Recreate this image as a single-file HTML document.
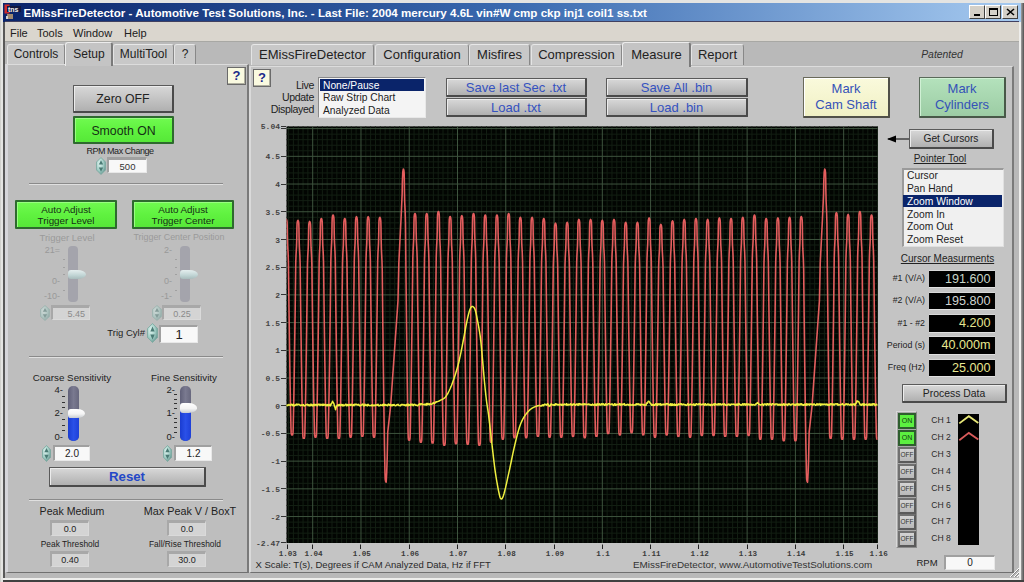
<!DOCTYPE html><html><head><meta charset="utf-8"><style>
*{margin:0;padding:0;box-sizing:border-box}
html,body{width:1024px;height:582px;overflow:hidden;background:#e6e6e6;font-family:"Liberation Sans",sans-serif;color:#222}
div{position:absolute}
.t{white-space:nowrap;text-align:center;overflow:visible}
.btn{background:linear-gradient(#d8d8d8,#c6c6c6 45%,#b0b0b0);border:1px solid #5a5a5a;border-right:2px solid #4a4a4a;border-bottom:2px solid #4a4a4a;border-radius:1px;box-shadow:inset 1px 1px 0 #ececec}
.gbtn{background:linear-gradient(#70fa50,#60f240 50%,#56e838);border:2px solid #2e6a2e;border-radius:1px;box-shadow:inset 1px 1px 0 #98ff80}
.tab{background:#c6c6c6;border-top:1px solid #e8e8e8;border-left:1px solid #e4e4e4;border-right:1px solid #808080;border-radius:3px 3px 0 0}
.num{background:#f8f8f8;border-top:2px solid #a0a0a0;border-left:2px solid #a0a0a0;border-bottom:1px solid #e8e8e8;border-right:1px solid #e8e8e8;font-size:10px;text-align:center}
.dnum{background:#d4d4d4;border-top:3px solid #a8a8a8;border-left:2px solid #a8a8a8;border-bottom:1px solid #dadada;border-right:1px solid #dadada;font-size:9px;text-align:center;color:#222}
.spin{background:radial-gradient(ellipse at 40% 40%,#d0e8e8,#90b8b8 70%,#6a9090);border-radius:50%/50%}
.blk{background:#000;border-top:1px solid #d8d8d8;border-left:0;border-bottom:1px solid #e0e0e0;border-right:0;text-align:right;font-size:12.6px;padding-right:4px}
.sep{background:#8a8a8a;height:2px;border-bottom:1px solid #e0e0e0}
</style></head><body>
<div style="left:0px;top:0px;width:1024px;height:582px;background:#e4e4e2"></div>
<div style="left:0px;top:0px;width:1px;height:582px;background:#d0d0cc"></div>
<div style="left:3px;top:3px;width:1018px;height:578px;background:#b8b8b8"></div>
<div style="left:3px;top:22px;width:2px;height:558px;background:#585858"></div>
<div style="left:1019px;top:22px;width:2px;height:557px;background:#eeeeec"></div>
<div style="left:1021px;top:3px;width:3px;height:579px;background:linear-gradient(90deg,#a0a0a0,#505050)"></div>
<div style="left:3px;top:578px;width:1018px;height:2px;background:#eeeeec"></div>
<div style="left:3px;top:580px;width:1021px;height:2px;background:#404040"></div>
<div style="left:3px;top:3px;width:1018px;height:19px;background:linear-gradient(90deg,#0a246a 0%,#3a6ab0 50%,#a6caf0 100%)"></div>
<svg style="position:absolute;left:0;top:0" width="24" height="22"><rect x="4.5" y="4.5" width="5" height="9" fill="#d02a2a"/><rect x="7" y="6" width="14" height="6" fill="#101840"/><text x="8" y="11.5" font-family="Liberation Sans" font-size="7" font-weight="bold" fill="#f0f0f0">tns</text><rect x="7" y="14" width="6" height="5" fill="#a08a70"/><rect x="6" y="16" width="2" height="3" fill="#d0d0d0"/></svg>
<div class="t" style="left:23.5px;top:3px;width:640px;height:19px;line-height:19px;text-align:left;color:#fff;font-weight:bold;font-size:11.6px">EMissFireDetector - Automotive Test Solutions, Inc. - Last File: 2004 mercury 4.6L vin#W cmp ckp inj1 coil1 ss.txt</div>
<div style="left:969px;top:5px;width:16px;height:14px;background:#d4d0c8;border-top:1px solid #fff;border-left:1px solid #fff;border-right:1px solid #404040;border-bottom:1px solid #404040"><div style="left:4px;top:8px;width:6px;height:2px;background:#000"></div></div>
<div style="left:985px;top:5px;width:16px;height:14px;background:#d4d0c8;border-top:1px solid #fff;border-left:1px solid #fff;border-right:1px solid #404040;border-bottom:1px solid #404040"><div style="left:3px;top:2px;width:9px;height:8px;border:1px solid #000;border-top-width:2px"></div></div>
<div style="left:1002px;top:5px;width:16px;height:14px;background:#d4d0c8;border-top:1px solid #fff;border-left:1px solid #fff;border-right:1px solid #404040;border-bottom:1px solid #404040"><svg style="position:absolute;left:3px;top:2px" width="9" height="8"><path d="M1 1L8 7M8 1L1 7" stroke="#000" stroke-width="1.6"/></svg></div>
<div style="left:5px;top:21px;width:1014px;height:21px;background:#dad6ce;border-top:1px solid #404060;border-bottom:1px solid #a8a8a4"></div>
<div class="t" style="left:10px;top:25px;width:15px;height:17px;line-height:17px;text-align:left;font-size:11px;color:#202020">File</div>
<div class="t" style="left:37px;top:25px;width:25px;height:17px;line-height:17px;text-align:left;font-size:11px;color:#202020">Tools</div>
<div class="t" style="left:73px;top:25px;width:40px;height:17px;line-height:17px;text-align:left;font-size:11px;color:#202020">Window</div>
<div class="t" style="left:124px;top:25px;width:21px;height:17px;line-height:17px;text-align:left;font-size:11px;color:#202020">Help</div>
<div style="left:5px;top:42px;width:1014px;height:536px;background:#b9b9b9"></div>
<div style="left:5px;top:64px;width:244px;height:509px;background:#bebebe;border-right:2px solid #7a7a7a;border-top:1px solid #dcdcdc;border-left:3px solid #d6d6da;border-bottom:1px solid #707070"></div>
<div style="left:7px;top:44px;width:58px;height:20px;background:#c8c8c8;border-top:1px solid #e8e8e8;border-left:1px solid #e4e4e4;border-right:1px solid #888;border-radius:3px 3px 0 0"></div>
<div class="t" style="left:7px;top:44px;width:58px;height:20px;line-height:20px;font-size:12px;color:#222">Controls</div>
<div style="left:65px;top:42px;width:48px;height:24px;background:#c4c4c4;border-top:1px solid #ececec;border-left:1px solid #ececec;border-right:2px solid #7a7a7a;border-radius:3px 3px 0 0"></div>
<div class="t" style="left:65px;top:44px;width:48px;height:20px;line-height:20px;font-size:12px;color:#222">Setup</div>
<div style="left:113px;top:44px;width:61px;height:20px;background:#c8c8c8;border-top:1px solid #e8e8e8;border-left:1px solid #e4e4e4;border-right:1px solid #888;border-radius:3px 3px 0 0"></div>
<div class="t" style="left:113px;top:44px;width:61px;height:20px;line-height:20px;font-size:12px;color:#222">MultiTool</div>
<div style="left:174px;top:44px;width:22px;height:20px;background:#c8c8c8;border-top:1px solid #e8e8e8;border-left:1px solid #e4e4e4;border-right:1px solid #888;border-radius:3px 3px 0 0"></div>
<div class="t" style="left:174px;top:44px;width:22px;height:20px;line-height:20px;font-size:12px;color:#222">?</div>
<div style="left:227px;top:67px;width:19px;height:18px;background:#fafae0;border:1px solid #6a6a6a;box-shadow:inset -1px -1px 0 #b0b0a0"><div class="t" style="left:0;top:0;width:17px;height:16px;line-height:16px;font-weight:bold;font-size:13px;color:#1a2a8a">?</div></div>
<div style="left:73px;top:85px;width:101px;height:28px;"></div>
<div class="btn t" style="left:73px;top:85px;width:101px;height:28px;line-height:26px;font-size:12.3px;color:#222">Zero OFF</div>
<div class="gbtn t" style="left:73px;top:116px;width:101px;height:28px;line-height:26px;font-size:12.3px;color:#153015">Smooth ON</div>
<div class="t" style="left:60px;top:146px;width:120px;height:11px;line-height:11px;font-size:9px;letter-spacing:-0.45px;color:#1e1e1e">RPM Max Change</div>
<svg style="position:absolute;left:96px;top:157px;opacity:1.0" width="10" height="18"><defs><radialGradient id="sg96157" cx="35%" cy="35%" r="70%"><stop offset="0" stop-color="#e0f4f0"/><stop offset="0.6" stop-color="#a0ccc4"/><stop offset="1" stop-color="#6a9a94"/></radialGradient></defs><path d="M5.0 0.5 L9.5 5.040000000000001 L9.5 12.959999999999999 L5.0 17.5 L0.5 12.959999999999999 L0.5 5.040000000000001 Z" fill="url(#sg96157)" stroke="#7aa8a0" stroke-width="0.8"/><path d="M5.0 3.2399999999999998 L7.2 7.56 L2.8 7.56 Z M5.0 14.76 L7.2 10.44 L2.8 10.44 Z" fill="#4a7a74"/></svg>
<div class="num t" style="left:107px;top:157px;width:40px;height:16px;line-height:13px;font-size:9.5px;color:#333;border-top-width:3px">500</div>
<div class="sep" style="left:29px;top:183px;width:194px"></div>
<div class="gbtn t" style="left:15px;top:200px;width:102px;height:29px;line-height:11px;font-size:9.8px;color:#153015;padding-top:2px">Auto Adjust<br>Trigger Level</div>
<div class="gbtn t" style="left:132px;top:200px;width:102px;height:29px;line-height:11px;font-size:9.8px;color:#153015;padding-top:2px">Auto Adjust<br>Trigger Center</div>
<div class="t" style="left:17px;top:232px;width:100px;height:11px;line-height:11px;font-size:9.5px;color:#9a9a9a">Trigger Level</div>
<div class="t" style="left:129px;top:232px;width:100px;height:11px;line-height:11px;font-size:8.9px;color:#9a9a9a">Trigger Center Position</div>
<div style="left:68px;top:246px;width:10px;height:56px;background:#a4a4ac;border-radius:4px"></div>
<div style="left:68px;top:270px;width:18px;height:9px;background:linear-gradient(#e4eeee,#c0d4d4 60%,#a8bcbc);border-radius:3px 50% 50% 3px / 3px 50% 50% 3px"></div>
<div class="t" style="left:38px;top:245px;width:22px;height:10px;line-height:10px;text-align:right;font-size:9px;color:#999">21=</div>
<div class="t" style="left:38px;top:276px;width:22px;height:10px;line-height:10px;text-align:right;font-size:9px;color:#999">0-</div>
<div class="t" style="left:38px;top:291px;width:22px;height:10px;line-height:10px;text-align:right;font-size:9px;color:#999">-10-</div>
<div style="left:63px;top:259px;width:2px;height:1px;background:#a0a0a0"></div>
<div style="left:63px;top:267px;width:2px;height:1px;background:#a0a0a0"></div>
<div style="left:63px;top:274px;width:2px;height:1px;background:#a0a0a0"></div>
<div style="left:63px;top:290px;width:2px;height:1px;background:#a0a0a0"></div>
<div style="left:180px;top:246px;width:10px;height:56px;background:#a4a4ac;border-radius:4px"></div>
<div style="left:180px;top:270px;width:18px;height:9px;background:linear-gradient(#e4eeee,#c0d4d4 60%,#a8bcbc);border-radius:3px 50% 50% 3px / 3px 50% 50% 3px"></div>
<div class="t" style="left:150px;top:245px;width:22px;height:10px;line-height:10px;text-align:right;font-size:9px;color:#999">2-</div>
<div class="t" style="left:150px;top:276px;width:22px;height:10px;line-height:10px;text-align:right;font-size:9px;color:#999">0-</div>
<div class="t" style="left:150px;top:291px;width:22px;height:10px;line-height:10px;text-align:right;font-size:9px;color:#999">-1-</div>
<div style="left:175px;top:259px;width:2px;height:1px;background:#a0a0a0"></div>
<div style="left:175px;top:267px;width:2px;height:1px;background:#a0a0a0"></div>
<div style="left:175px;top:274px;width:2px;height:1px;background:#a0a0a0"></div>
<div style="left:175px;top:290px;width:2px;height:1px;background:#a0a0a0"></div>
<svg style="position:absolute;left:40px;top:305px;opacity:0.5" width="10" height="16"><defs><radialGradient id="sg40305" cx="35%" cy="35%" r="70%"><stop offset="0" stop-color="#e0f4f0"/><stop offset="0.6" stop-color="#a0ccc4"/><stop offset="1" stop-color="#6a9a94"/></radialGradient></defs><path d="M5.0 0.5 L9.5 4.48 L9.5 11.52 L5.0 15.5 L0.5 11.52 L0.5 4.48 Z" fill="url(#sg40305)" stroke="#7aa8a0" stroke-width="0.8"/><path d="M5.0 2.88 L7.2 6.72 L2.8 6.72 Z M5.0 13.12 L7.2 9.28 L2.8 9.28 Z" fill="#4a7a74"/></svg>
<div class="dnum t" style="left:51px;top:305px;width:39px;height:15px;line-height:12px;text-align:right;padding-right:4px;color:#8a8a8a">5.45</div>
<svg style="position:absolute;left:152px;top:305px;opacity:0.5" width="10" height="16"><defs><radialGradient id="sg152305" cx="35%" cy="35%" r="70%"><stop offset="0" stop-color="#e0f4f0"/><stop offset="0.6" stop-color="#a0ccc4"/><stop offset="1" stop-color="#6a9a94"/></radialGradient></defs><path d="M5.0 0.5 L9.5 4.48 L9.5 11.52 L5.0 15.5 L0.5 11.52 L0.5 4.48 Z" fill="url(#sg152305)" stroke="#7aa8a0" stroke-width="0.8"/><path d="M5.0 2.88 L7.2 6.72 L2.8 6.72 Z M5.0 13.12 L7.2 9.28 L2.8 9.28 Z" fill="#4a7a74"/></svg>
<div class="dnum t" style="left:162px;top:305px;width:39px;height:15px;line-height:12px;color:#8a8a8a">0.25</div>
<div class="t" style="left:90px;top:326px;width:55px;height:13px;line-height:13px;text-align:right;font-size:9.5px;color:#222">Trig Cyl#</div>
<svg style="position:absolute;left:147px;top:323px;opacity:1.0" width="11" height="20"><defs><radialGradient id="sg147323" cx="35%" cy="35%" r="70%"><stop offset="0" stop-color="#e0f4f0"/><stop offset="0.6" stop-color="#a0ccc4"/><stop offset="1" stop-color="#6a9a94"/></radialGradient></defs><path d="M5.5 0.5 L10.5 5.6000000000000005 L10.5 14.399999999999999 L5.5 19.5 L0.5 14.399999999999999 L0.5 5.6000000000000005 Z" fill="url(#sg147323)" stroke="#7aa8a0" stroke-width="0.8"/><path d="M5.5 3.5999999999999996 L7.7 8.4 L3.3 8.4 Z M5.5 16.4 L7.7 11.6 L3.3 11.6 Z" fill="#4a7a74"/></svg>
<div class="num t" style="left:159px;top:325px;width:39px;height:18px;line-height:15px;font-size:13px">1</div>
<div class="sep" style="left:29px;top:356px;width:194px"></div>
<div class="t" style="left:22px;top:372px;width:100px;height:12px;line-height:12px;font-size:9.8px;color:#222">Coarse Sensitivity</div>
<div class="t" style="left:134px;top:372px;width:100px;height:12px;line-height:12px;font-size:9.8px;color:#222">Fine Sensitivity</div>
<div style="left:68px;top:385.5px;width:10.5px;height:55px;background:linear-gradient(90deg,#606078,#7a7a90 50%,#68687e);border-radius:5px"></div>
<div style="left:68px;top:415px;width:10.5px;height:25.5px;background:linear-gradient(90deg,#1a3cd0,#2a50e8 50%,#1e40d8);border-radius:0 0 5px 5px"></div>
<div style="left:68px;top:408.5px;width:17px;height:9.5px;background:linear-gradient(#ffffff,#f4f4f4 55%,#c8ccd0);border-radius:3px 50% 50% 3px / 3px 50% 50% 3px"></div>
<div class="t" style="left:49px;top:385px;width:14px;height:10px;line-height:10px;text-align:right;font-size:9.5px;color:#222">4-</div>
<div class="t" style="left:49px;top:408px;width:14px;height:10px;line-height:10px;text-align:right;font-size:9.5px;color:#222">2-</div>
<div class="t" style="left:49px;top:432px;width:14px;height:10px;line-height:10px;text-align:right;font-size:9.5px;color:#222">0-</div>
<div style="left:62px;top:396px;width:3px;height:1px;background:#333"></div>
<div style="left:62px;top:402px;width:3px;height:1px;background:#333"></div>
<div style="left:62px;top:407px;width:3px;height:1px;background:#333"></div>
<div style="left:62px;top:419px;width:3px;height:1px;background:#333"></div>
<div style="left:62px;top:425px;width:3px;height:1px;background:#333"></div>
<div style="left:62px;top:430px;width:3px;height:1px;background:#333"></div>
<div style="left:180px;top:385.5px;width:10.5px;height:55px;background:linear-gradient(90deg,#606078,#7a7a90 50%,#68687e);border-radius:5px"></div>
<div style="left:180px;top:409.5px;width:10.5px;height:31.0px;background:linear-gradient(90deg,#1a3cd0,#2a50e8 50%,#1e40d8);border-radius:0 0 5px 5px"></div>
<div style="left:180px;top:403.0px;width:17px;height:9.5px;background:linear-gradient(#ffffff,#f4f4f4 55%,#c8ccd0);border-radius:3px 50% 50% 3px / 3px 50% 50% 3px"></div>
<div class="t" style="left:161px;top:385px;width:14px;height:10px;line-height:10px;text-align:right;font-size:9.5px;color:#222">2-</div>
<div class="t" style="left:161px;top:408px;width:14px;height:10px;line-height:10px;text-align:right;font-size:9.5px;color:#222">1-</div>
<div class="t" style="left:161px;top:432px;width:14px;height:10px;line-height:10px;text-align:right;font-size:9.5px;color:#222">0-</div>
<div style="left:174px;top:394px;width:3px;height:1px;background:#333"></div>
<div style="left:174px;top:399px;width:3px;height:1px;background:#333"></div>
<div style="left:174px;top:403px;width:3px;height:1px;background:#333"></div>
<div style="left:174px;top:408px;width:3px;height:1px;background:#333"></div>
<div style="left:174px;top:418px;width:3px;height:1px;background:#333"></div>
<div style="left:174px;top:422px;width:3px;height:1px;background:#333"></div>
<div style="left:174px;top:427px;width:3px;height:1px;background:#333"></div>
<div style="left:174px;top:432px;width:3px;height:1px;background:#333"></div>
<svg style="position:absolute;left:42px;top:445px;opacity:1.0" width="9" height="17"><defs><radialGradient id="sg42445" cx="35%" cy="35%" r="70%"><stop offset="0" stop-color="#e0f4f0"/><stop offset="0.6" stop-color="#a0ccc4"/><stop offset="1" stop-color="#6a9a94"/></radialGradient></defs><path d="M4.5 0.5 L8.5 4.760000000000001 L8.5 12.24 L4.5 16.5 L0.5 12.24 L0.5 4.760000000000001 Z" fill="url(#sg42445)" stroke="#7aa8a0" stroke-width="0.8"/><path d="M4.5 3.06 L6.7 7.14 L2.3 7.14 Z M4.5 13.94 L6.7 9.86 L2.3 9.86 Z" fill="#4a7a74"/></svg>
<div class="num t" style="left:53px;top:445px;width:37px;height:16px;line-height:13px">2.0</div>
<svg style="position:absolute;left:163px;top:445px;opacity:1.0" width="9" height="17"><defs><radialGradient id="sg163445" cx="35%" cy="35%" r="70%"><stop offset="0" stop-color="#e0f4f0"/><stop offset="0.6" stop-color="#a0ccc4"/><stop offset="1" stop-color="#6a9a94"/></radialGradient></defs><path d="M4.5 0.5 L8.5 4.760000000000001 L8.5 12.24 L4.5 16.5 L0.5 12.24 L0.5 4.760000000000001 Z" fill="url(#sg163445)" stroke="#7aa8a0" stroke-width="0.8"/><path d="M4.5 3.06 L6.7 7.14 L2.3 7.14 Z M4.5 13.94 L6.7 9.86 L2.3 9.86 Z" fill="#4a7a74"/></svg>
<div class="num t" style="left:174px;top:445px;width:38px;height:16px;line-height:13px">1.2</div>
<div class="btn t" style="left:49px;top:467px;width:157px;height:20px;line-height:18px;font-size:13.2px;font-weight:bold;color:#2448c8">Reset</div>
<div class="sep" style="left:29px;top:499px;width:194px"></div>
<div class="t" style="left:20px;top:505px;width:104px;height:13px;line-height:13px;font-size:10.6px;color:#222">Peak Medium</div>
<div class="t" style="left:138px;top:505px;width:104px;height:13px;line-height:13px;font-size:10.8px;color:#222">Max Peak V / BoxT</div>
<div class="dnum t" style="left:50px;top:520px;width:39px;height:16px;line-height:13px;color:#222">0.0</div>
<div class="dnum t" style="left:167px;top:520px;width:39px;height:16px;line-height:13px;color:#222">0.0</div>
<div class="t" style="left:20px;top:539px;width:100px;height:11px;line-height:11px;font-size:8.4px;color:#222">Peak Threshold</div>
<div class="t" style="left:135px;top:539px;width:100px;height:11px;line-height:11px;font-size:8.4px;color:#222">Fall/Rise Threshold</div>
<div class="dnum t" style="left:50px;top:551px;width:39px;height:16px;line-height:13px;color:#222">0.40</div>
<div class="dnum t" style="left:167px;top:551px;width:39px;height:16px;line-height:13px;color:#222">30.0</div>
<div style="left:249px;top:66px;width:765px;height:507px;background:#c4c4c4;border-left:2px solid #dadada;border-top:1px solid #dcdcdc;border-right:2px solid #7a7a7a;border-bottom:1px solid #707070"></div>
<div style="left:251px;top:44px;width:123px;height:21px;background:#c8c8c8;border-top:1px solid #e8e8e8;border-left:1px solid #e4e4e4;border-right:1px solid #888;border-radius:3px 3px 0 0"></div>
<div class="t" style="left:251px;top:44px;width:123px;height:21px;line-height:21px;font-size:13px;color:#222">EMissFireDetector</div>
<div style="left:375px;top:44px;width:94px;height:21px;background:#c8c8c8;border-top:1px solid #e8e8e8;border-left:1px solid #e4e4e4;border-right:1px solid #888;border-radius:3px 3px 0 0"></div>
<div class="t" style="left:375px;top:44px;width:94px;height:21px;line-height:21px;font-size:13px;color:#222">Configuration</div>
<div style="left:469px;top:44px;width:61px;height:21px;background:#c8c8c8;border-top:1px solid #e8e8e8;border-left:1px solid #e4e4e4;border-right:1px solid #888;border-radius:3px 3px 0 0"></div>
<div class="t" style="left:469px;top:44px;width:61px;height:21px;line-height:21px;font-size:13px;color:#222">Misfires</div>
<div style="left:531px;top:44px;width:91px;height:21px;background:#c8c8c8;border-top:1px solid #e8e8e8;border-left:1px solid #e4e4e4;border-right:1px solid #888;border-radius:3px 3px 0 0"></div>
<div class="t" style="left:531px;top:44px;width:91px;height:21px;line-height:21px;font-size:13px;color:#222">Compression</div>
<div style="left:622px;top:42px;width:69px;height:25px;background:#c4c4c4;border-top:1px solid #ececec;border-left:1px solid #ececec;border-right:2px solid #7a7a7a;border-radius:3px 3px 0 0"></div>
<div class="t" style="left:622px;top:44px;width:69px;height:21px;line-height:21px;font-size:13px;color:#222">Measure</div>
<div style="left:691px;top:44px;width:53px;height:21px;background:#c8c8c8;border-top:1px solid #e8e8e8;border-left:1px solid #e4e4e4;border-right:1px solid #888;border-radius:3px 3px 0 0"></div>
<div class="t" style="left:691px;top:44px;width:53px;height:21px;line-height:21px;font-size:13px;color:#222">Report</div>
<div class="t" style="left:880px;top:47px;width:124px;height:16px;line-height:16px;font-style:italic;font-size:10.4px;color:#333">Patented</div>
<div style="left:253px;top:69px;width:18px;height:18px;background:#fafae0;border:1px solid #6a6a6a;box-shadow:inset -1px -1px 0 #b0b0a0"><div class="t" style="left:0;top:0;width:16px;height:16px;line-height:16px;font-weight:bold;font-size:13px;color:#1a2a8a">?</div></div>
<div class="t" style="left:254px;top:78.5px;width:60px;height:13px;line-height:13px;text-align:right;font-size:10.6px;letter-spacing:-0.35px;color:#222">Live</div>
<div class="t" style="left:254px;top:90.5px;width:60px;height:13px;line-height:13px;text-align:right;font-size:10.6px;letter-spacing:-0.35px;color:#222">Update</div>
<div class="t" style="left:254px;top:102.5px;width:60px;height:13px;line-height:13px;text-align:right;font-size:10.6px;letter-spacing:-0.35px;color:#222">Displayed</div>
<div style="left:318px;top:77px;width:108px;height:41px;background:#f4f4f4;border-top:1px solid #8a8a8a;border-left:1px solid #8a8a8a;border-bottom:1px solid #e8e8e8;border-right:1px solid #e8e8e8"></div>
<div style="left:320px;top:79px;width:104px;height:12px;background:#0a246a"></div>
<div class="t" style="left:323px;top:79.5px;width:100px;height:12px;line-height:12px;text-align:left;font-size:10.25px;color:#fff">None/Pause</div>
<div class="t" style="left:323px;top:92px;width:100px;height:12px;line-height:12px;text-align:left;font-size:10.25px;color:#222">Raw Strip Chart</div>
<div class="t" style="left:323px;top:104.5px;width:100px;height:12px;line-height:12px;text-align:left;font-size:10.25px;color:#222">Analyzed Data</div>
<div class="btn t" style="left:446px;top:78px;width:141px;height:19px;line-height:17px;font-size:13px;color:#3552c0">Save last Sec .txt</div>
<div class="btn t" style="left:446px;top:98px;width:141px;height:19px;line-height:17px;font-size:13px;color:#3552c0">Load .txt</div>
<div class="btn t" style="left:606px;top:78px;width:142px;height:19px;line-height:17px;font-size:13px;color:#3552c0">Save All .bin</div>
<div class="btn t" style="left:606px;top:98px;width:142px;height:19px;line-height:17px;font-size:13px;color:#3552c0">Load .bin</div>
<div class="t" style="left:803px;top:77px;width:87px;height:41px;line-height:16px;padding-top:3px;font-size:13px;color:#3552b8;background:linear-gradient(#fafadc,#f0f0c4);border:1px solid #6a6a5a;border-right:2px solid #505048;border-bottom:2px solid #505048;border-radius:1px;box-shadow:inset 1px 1px 0 #fff">Mark<br>Cam Shaft</div>
<div class="t" style="left:919px;top:77px;width:87px;height:41px;line-height:16px;padding-top:3px;font-size:13px;color:#3552b8;background:linear-gradient(#b4e2bc,#9ccca4);border:1px solid #5a6a5a;border-right:2px solid #485848;border-bottom:2px solid #485848;border-radius:1px;box-shadow:inset 1px 1px 0 #d0f0d4">Mark<br>Cylinders</div>
<div class="btn t" style="left:909px;top:129px;width:85px;height:20px;line-height:18px;font-size:10.2px;color:#222">Get Cursors</div>
<svg style="position:absolute;left:886px;top:133px" width="24" height="12"><path d="M2 6H23" stroke="#000" stroke-width="1"/><path d="M1 6L10 2.5V9.5Z" fill="#000"/></svg>
<div class="t" style="left:900px;top:153px;width:80px;height:12px;line-height:12px;font-size:10px;color:#222"><u>Pointer Tool</u></div>
<div style="left:902px;top:168px;width:102px;height:79px;background:#f0f0f0;border-top:2px solid #9a9a9a;border-left:2px solid #9a9a9a;border-bottom:1px solid #e0e0e0;border-right:1px solid #e0e0e0"></div>
<div style="left:903px;top:195px;width:99px;height:12px;background:#0a246a"></div>
<div class="t" style="left:907px;top:170.2px;width:95px;height:12px;line-height:12px;text-align:left;font-size:10.3px;color:#222">Cursor</div>
<div class="t" style="left:907px;top:183.0px;width:95px;height:12px;line-height:12px;text-align:left;font-size:10.3px;color:#222">Pan Hand</div>
<div class="t" style="left:907px;top:195.79999999999998px;width:95px;height:12px;line-height:12px;text-align:left;font-size:10.3px;color:#fff">Zoom Window</div>
<div class="t" style="left:907px;top:208.6px;width:95px;height:12px;line-height:12px;text-align:left;font-size:10.3px;color:#222">Zoom In</div>
<div class="t" style="left:907px;top:221.39999999999998px;width:95px;height:12px;line-height:12px;text-align:left;font-size:10.3px;color:#222">Zoom Out</div>
<div class="t" style="left:907px;top:234.2px;width:95px;height:12px;line-height:12px;text-align:left;font-size:10.3px;color:#222">Zoom Reset</div>
<div class="t" style="left:895px;top:253px;width:105px;height:12px;line-height:12px;font-size:10px;color:#222"><u>Cursor Measurments</u></div>
<div class="t" style="left:869px;top:270.0px;width:56px;height:17px;line-height:17px;text-align:right;font-size:8.8px;color:#222">#1 (V/A)</div>
<div class="blk t" style="left:928.5px;top:269.5px;width:66px;height:18.5px;line-height:16px;color:#c8d6c8">191.600</div>
<div class="t" style="left:869px;top:292.3px;width:56px;height:17px;line-height:17px;text-align:right;font-size:8.8px;color:#222">#2 (V/A)</div>
<div class="blk t" style="left:928.5px;top:291.8px;width:66px;height:18.5px;line-height:16px;color:#d0d4d0">195.800</div>
<div class="t" style="left:869px;top:314.6px;width:56px;height:17px;line-height:17px;text-align:right;font-size:8.8px;color:#222">#1 - #2</div>
<div class="blk t" style="left:928.5px;top:314.1px;width:66px;height:18.5px;line-height:16px;color:#e4e490">4.200</div>
<div class="t" style="left:869px;top:336.9px;width:56px;height:17px;line-height:17px;text-align:right;font-size:8.8px;color:#222">Period (s)</div>
<div class="blk t" style="left:928.5px;top:336.4px;width:66px;height:18.5px;line-height:16px;color:#e8e890">40.000m</div>
<div class="t" style="left:869px;top:359.2px;width:56px;height:17px;line-height:17px;text-align:right;font-size:8.8px;color:#222">Freq (Hz)</div>
<div class="blk t" style="left:928.5px;top:358.7px;width:66px;height:18.5px;line-height:16px;color:#e8e890">25.000</div>
<div class="btn t" style="left:902px;top:384px;width:105px;height:19px;line-height:17px;font-size:10.4px;color:#222">Process Data</div>
<div style="left:896px;top:411px;width:21px;height:137px;background:#a8a8a8;border:1px solid #8a8a8a;border-top-color:#d8d8d8;border-left-color:#d8d8d8"></div>
<div class="t" style="left:898px;top:413.0px;width:18px;height:16px;line-height:12px;font-size:7px;color:#134013;background:#5cf040;border:2px solid #2e5e2e">ON</div>
<div class="t" style="left:925px;top:413.0px;width:32px;height:15px;line-height:15px;font-size:8.6px;color:#2a2a2a">CH 1</div>
<div class="t" style="left:898px;top:429.9px;width:18px;height:16px;line-height:12px;font-size:7px;color:#134013;background:#5cf040;border:2px solid #2e5e2e">ON</div>
<div class="t" style="left:925px;top:429.9px;width:32px;height:15px;line-height:15px;font-size:8.6px;color:#2a2a2a">CH 2</div>
<div class="t" style="left:898px;top:446.8px;width:18px;height:16px;line-height:12px;font-size:6.5px;color:#333;background:linear-gradient(#d4d4d4,#b8b8b8);border:2px solid #5a5a5a;border-top-color:#707070;border-left-color:#707070">OFF</div>
<div class="t" style="left:925px;top:446.8px;width:32px;height:15px;line-height:15px;font-size:8.6px;color:#2a2a2a">CH 3</div>
<div class="t" style="left:898px;top:463.7px;width:18px;height:16px;line-height:12px;font-size:6.5px;color:#333;background:linear-gradient(#d4d4d4,#b8b8b8);border:2px solid #5a5a5a;border-top-color:#707070;border-left-color:#707070">OFF</div>
<div class="t" style="left:925px;top:463.7px;width:32px;height:15px;line-height:15px;font-size:8.6px;color:#2a2a2a">CH 4</div>
<div class="t" style="left:898px;top:480.6px;width:18px;height:16px;line-height:12px;font-size:6.5px;color:#333;background:linear-gradient(#d4d4d4,#b8b8b8);border:2px solid #5a5a5a;border-top-color:#707070;border-left-color:#707070">OFF</div>
<div class="t" style="left:925px;top:480.6px;width:32px;height:15px;line-height:15px;font-size:8.6px;color:#2a2a2a">CH 5</div>
<div class="t" style="left:898px;top:497.5px;width:18px;height:16px;line-height:12px;font-size:6.5px;color:#333;background:linear-gradient(#d4d4d4,#b8b8b8);border:2px solid #5a5a5a;border-top-color:#707070;border-left-color:#707070">OFF</div>
<div class="t" style="left:925px;top:497.5px;width:32px;height:15px;line-height:15px;font-size:8.6px;color:#2a2a2a">CH 6</div>
<div class="t" style="left:898px;top:514.4px;width:18px;height:16px;line-height:12px;font-size:6.5px;color:#333;background:linear-gradient(#d4d4d4,#b8b8b8);border:2px solid #5a5a5a;border-top-color:#707070;border-left-color:#707070">OFF</div>
<div class="t" style="left:925px;top:514.4px;width:32px;height:15px;line-height:15px;font-size:8.6px;color:#2a2a2a">CH 7</div>
<div class="t" style="left:898px;top:531.3px;width:18px;height:16px;line-height:12px;font-size:6.5px;color:#333;background:linear-gradient(#d4d4d4,#b8b8b8);border:2px solid #5a5a5a;border-top-color:#707070;border-left-color:#707070">OFF</div>
<div class="t" style="left:925px;top:531.3px;width:32px;height:15px;line-height:15px;font-size:8.6px;color:#2a2a2a">CH 8</div>
<div style="left:958px;top:414px;width:21px;height:131px;background:#000"></div>
<svg style="position:absolute;left:957px;top:414px" width="23" height="30"><path d="M2.3 9.4L11.8 2.2L21.3 8.9" stroke="#e8e878" stroke-width="1.8" fill="none"/><path d="M2.3 26.2L11.8 18.9L21.3 25.6" stroke="#d85a5a" stroke-width="1.8" fill="none"/></svg>
<div class="t" style="left:912px;top:556px;width:30px;height:13px;line-height:13px;font-size:9.5px;color:#222">RPM</div>
<div class="num t" style="left:944px;top:555px;width:51px;height:15px;line-height:12px;font-size:10px">0</div>
<svg style="position:absolute;left:1008px;top:566px" width="12" height="12"><path d="M11 2L2 11M11 6L6 11M11 9L9 11" stroke="#fff" stroke-width="1"/><path d="M11 3L3 11M11 7L7 11" stroke="#888" stroke-width="1"/></svg>
<svg style="position:absolute;left:0;top:0" width="1024" height="582"><rect x="286.5" y="126.4" width="591.0" height="416.6" fill="#020502"/><line x1="288.56" y1="126.4" x2="288.56" y2="543.0" stroke="#131f13" stroke-width="1"/><line x1="293.39" y1="126.4" x2="293.39" y2="543.0" stroke="#131f13" stroke-width="1"/><line x1="298.22" y1="126.4" x2="298.22" y2="543.0" stroke="#131f13" stroke-width="1"/><line x1="303.05" y1="126.4" x2="303.05" y2="543.0" stroke="#131f13" stroke-width="1"/><line x1="307.87" y1="126.4" x2="307.87" y2="543.0" stroke="#131f13" stroke-width="1"/><line x1="317.53" y1="126.4" x2="317.53" y2="543.0" stroke="#131f13" stroke-width="1"/><line x1="322.35" y1="126.4" x2="322.35" y2="543.0" stroke="#131f13" stroke-width="1"/><line x1="327.18" y1="126.4" x2="327.18" y2="543.0" stroke="#131f13" stroke-width="1"/><line x1="332.01" y1="126.4" x2="332.01" y2="543.0" stroke="#131f13" stroke-width="1"/><line x1="336.83" y1="126.4" x2="336.83" y2="543.0" stroke="#131f13" stroke-width="1"/><line x1="341.66" y1="126.4" x2="341.66" y2="543.0" stroke="#131f13" stroke-width="1"/><line x1="346.49" y1="126.4" x2="346.49" y2="543.0" stroke="#131f13" stroke-width="1"/><line x1="351.32" y1="126.4" x2="351.32" y2="543.0" stroke="#131f13" stroke-width="1"/><line x1="356.14" y1="126.4" x2="356.14" y2="543.0" stroke="#131f13" stroke-width="1"/><line x1="365.80" y1="126.4" x2="365.80" y2="543.0" stroke="#131f13" stroke-width="1"/><line x1="370.62" y1="126.4" x2="370.62" y2="543.0" stroke="#131f13" stroke-width="1"/><line x1="375.45" y1="126.4" x2="375.45" y2="543.0" stroke="#131f13" stroke-width="1"/><line x1="380.28" y1="126.4" x2="380.28" y2="543.0" stroke="#131f13" stroke-width="1"/><line x1="385.10" y1="126.4" x2="385.10" y2="543.0" stroke="#131f13" stroke-width="1"/><line x1="389.93" y1="126.4" x2="389.93" y2="543.0" stroke="#131f13" stroke-width="1"/><line x1="394.76" y1="126.4" x2="394.76" y2="543.0" stroke="#131f13" stroke-width="1"/><line x1="399.59" y1="126.4" x2="399.59" y2="543.0" stroke="#131f13" stroke-width="1"/><line x1="404.41" y1="126.4" x2="404.41" y2="543.0" stroke="#131f13" stroke-width="1"/><line x1="414.07" y1="126.4" x2="414.07" y2="543.0" stroke="#131f13" stroke-width="1"/><line x1="418.89" y1="126.4" x2="418.89" y2="543.0" stroke="#131f13" stroke-width="1"/><line x1="423.72" y1="126.4" x2="423.72" y2="543.0" stroke="#131f13" stroke-width="1"/><line x1="428.55" y1="126.4" x2="428.55" y2="543.0" stroke="#131f13" stroke-width="1"/><line x1="433.37" y1="126.4" x2="433.37" y2="543.0" stroke="#131f13" stroke-width="1"/><line x1="438.20" y1="126.4" x2="438.20" y2="543.0" stroke="#131f13" stroke-width="1"/><line x1="443.03" y1="126.4" x2="443.03" y2="543.0" stroke="#131f13" stroke-width="1"/><line x1="447.86" y1="126.4" x2="447.86" y2="543.0" stroke="#131f13" stroke-width="1"/><line x1="452.68" y1="126.4" x2="452.68" y2="543.0" stroke="#131f13" stroke-width="1"/><line x1="462.34" y1="126.4" x2="462.34" y2="543.0" stroke="#131f13" stroke-width="1"/><line x1="467.16" y1="126.4" x2="467.16" y2="543.0" stroke="#131f13" stroke-width="1"/><line x1="471.99" y1="126.4" x2="471.99" y2="543.0" stroke="#131f13" stroke-width="1"/><line x1="476.82" y1="126.4" x2="476.82" y2="543.0" stroke="#131f13" stroke-width="1"/><line x1="481.64" y1="126.4" x2="481.64" y2="543.0" stroke="#131f13" stroke-width="1"/><line x1="486.47" y1="126.4" x2="486.47" y2="543.0" stroke="#131f13" stroke-width="1"/><line x1="491.30" y1="126.4" x2="491.30" y2="543.0" stroke="#131f13" stroke-width="1"/><line x1="496.13" y1="126.4" x2="496.13" y2="543.0" stroke="#131f13" stroke-width="1"/><line x1="500.95" y1="126.4" x2="500.95" y2="543.0" stroke="#131f13" stroke-width="1"/><line x1="510.61" y1="126.4" x2="510.61" y2="543.0" stroke="#131f13" stroke-width="1"/><line x1="515.43" y1="126.4" x2="515.43" y2="543.0" stroke="#131f13" stroke-width="1"/><line x1="520.26" y1="126.4" x2="520.26" y2="543.0" stroke="#131f13" stroke-width="1"/><line x1="525.09" y1="126.4" x2="525.09" y2="543.0" stroke="#131f13" stroke-width="1"/><line x1="529.91" y1="126.4" x2="529.91" y2="543.0" stroke="#131f13" stroke-width="1"/><line x1="534.74" y1="126.4" x2="534.74" y2="543.0" stroke="#131f13" stroke-width="1"/><line x1="539.57" y1="126.4" x2="539.57" y2="543.0" stroke="#131f13" stroke-width="1"/><line x1="544.40" y1="126.4" x2="544.40" y2="543.0" stroke="#131f13" stroke-width="1"/><line x1="549.22" y1="126.4" x2="549.22" y2="543.0" stroke="#131f13" stroke-width="1"/><line x1="558.88" y1="126.4" x2="558.88" y2="543.0" stroke="#131f13" stroke-width="1"/><line x1="563.70" y1="126.4" x2="563.70" y2="543.0" stroke="#131f13" stroke-width="1"/><line x1="568.53" y1="126.4" x2="568.53" y2="543.0" stroke="#131f13" stroke-width="1"/><line x1="573.36" y1="126.4" x2="573.36" y2="543.0" stroke="#131f13" stroke-width="1"/><line x1="578.18" y1="126.4" x2="578.18" y2="543.0" stroke="#131f13" stroke-width="1"/><line x1="583.01" y1="126.4" x2="583.01" y2="543.0" stroke="#131f13" stroke-width="1"/><line x1="587.84" y1="126.4" x2="587.84" y2="543.0" stroke="#131f13" stroke-width="1"/><line x1="592.67" y1="126.4" x2="592.67" y2="543.0" stroke="#131f13" stroke-width="1"/><line x1="597.49" y1="126.4" x2="597.49" y2="543.0" stroke="#131f13" stroke-width="1"/><line x1="607.15" y1="126.4" x2="607.15" y2="543.0" stroke="#131f13" stroke-width="1"/><line x1="611.97" y1="126.4" x2="611.97" y2="543.0" stroke="#131f13" stroke-width="1"/><line x1="616.80" y1="126.4" x2="616.80" y2="543.0" stroke="#131f13" stroke-width="1"/><line x1="621.63" y1="126.4" x2="621.63" y2="543.0" stroke="#131f13" stroke-width="1"/><line x1="626.45" y1="126.4" x2="626.45" y2="543.0" stroke="#131f13" stroke-width="1"/><line x1="631.28" y1="126.4" x2="631.28" y2="543.0" stroke="#131f13" stroke-width="1"/><line x1="636.11" y1="126.4" x2="636.11" y2="543.0" stroke="#131f13" stroke-width="1"/><line x1="640.94" y1="126.4" x2="640.94" y2="543.0" stroke="#131f13" stroke-width="1"/><line x1="645.76" y1="126.4" x2="645.76" y2="543.0" stroke="#131f13" stroke-width="1"/><line x1="655.42" y1="126.4" x2="655.42" y2="543.0" stroke="#131f13" stroke-width="1"/><line x1="660.24" y1="126.4" x2="660.24" y2="543.0" stroke="#131f13" stroke-width="1"/><line x1="665.07" y1="126.4" x2="665.07" y2="543.0" stroke="#131f13" stroke-width="1"/><line x1="669.90" y1="126.4" x2="669.90" y2="543.0" stroke="#131f13" stroke-width="1"/><line x1="674.72" y1="126.4" x2="674.72" y2="543.0" stroke="#131f13" stroke-width="1"/><line x1="679.55" y1="126.4" x2="679.55" y2="543.0" stroke="#131f13" stroke-width="1"/><line x1="684.38" y1="126.4" x2="684.38" y2="543.0" stroke="#131f13" stroke-width="1"/><line x1="689.21" y1="126.4" x2="689.21" y2="543.0" stroke="#131f13" stroke-width="1"/><line x1="694.03" y1="126.4" x2="694.03" y2="543.0" stroke="#131f13" stroke-width="1"/><line x1="703.69" y1="126.4" x2="703.69" y2="543.0" stroke="#131f13" stroke-width="1"/><line x1="708.51" y1="126.4" x2="708.51" y2="543.0" stroke="#131f13" stroke-width="1"/><line x1="713.34" y1="126.4" x2="713.34" y2="543.0" stroke="#131f13" stroke-width="1"/><line x1="718.17" y1="126.4" x2="718.17" y2="543.0" stroke="#131f13" stroke-width="1"/><line x1="722.99" y1="126.4" x2="722.99" y2="543.0" stroke="#131f13" stroke-width="1"/><line x1="727.82" y1="126.4" x2="727.82" y2="543.0" stroke="#131f13" stroke-width="1"/><line x1="732.65" y1="126.4" x2="732.65" y2="543.0" stroke="#131f13" stroke-width="1"/><line x1="737.48" y1="126.4" x2="737.48" y2="543.0" stroke="#131f13" stroke-width="1"/><line x1="742.30" y1="126.4" x2="742.30" y2="543.0" stroke="#131f13" stroke-width="1"/><line x1="751.96" y1="126.4" x2="751.96" y2="543.0" stroke="#131f13" stroke-width="1"/><line x1="756.78" y1="126.4" x2="756.78" y2="543.0" stroke="#131f13" stroke-width="1"/><line x1="761.61" y1="126.4" x2="761.61" y2="543.0" stroke="#131f13" stroke-width="1"/><line x1="766.44" y1="126.4" x2="766.44" y2="543.0" stroke="#131f13" stroke-width="1"/><line x1="771.26" y1="126.4" x2="771.26" y2="543.0" stroke="#131f13" stroke-width="1"/><line x1="776.09" y1="126.4" x2="776.09" y2="543.0" stroke="#131f13" stroke-width="1"/><line x1="780.92" y1="126.4" x2="780.92" y2="543.0" stroke="#131f13" stroke-width="1"/><line x1="785.75" y1="126.4" x2="785.75" y2="543.0" stroke="#131f13" stroke-width="1"/><line x1="790.57" y1="126.4" x2="790.57" y2="543.0" stroke="#131f13" stroke-width="1"/><line x1="800.23" y1="126.4" x2="800.23" y2="543.0" stroke="#131f13" stroke-width="1"/><line x1="805.05" y1="126.4" x2="805.05" y2="543.0" stroke="#131f13" stroke-width="1"/><line x1="809.88" y1="126.4" x2="809.88" y2="543.0" stroke="#131f13" stroke-width="1"/><line x1="814.71" y1="126.4" x2="814.71" y2="543.0" stroke="#131f13" stroke-width="1"/><line x1="819.53" y1="126.4" x2="819.53" y2="543.0" stroke="#131f13" stroke-width="1"/><line x1="824.36" y1="126.4" x2="824.36" y2="543.0" stroke="#131f13" stroke-width="1"/><line x1="829.19" y1="126.4" x2="829.19" y2="543.0" stroke="#131f13" stroke-width="1"/><line x1="834.02" y1="126.4" x2="834.02" y2="543.0" stroke="#131f13" stroke-width="1"/><line x1="838.84" y1="126.4" x2="838.84" y2="543.0" stroke="#131f13" stroke-width="1"/><line x1="848.50" y1="126.4" x2="848.50" y2="543.0" stroke="#131f13" stroke-width="1"/><line x1="853.32" y1="126.4" x2="853.32" y2="543.0" stroke="#131f13" stroke-width="1"/><line x1="858.15" y1="126.4" x2="858.15" y2="543.0" stroke="#131f13" stroke-width="1"/><line x1="862.98" y1="126.4" x2="862.98" y2="543.0" stroke="#131f13" stroke-width="1"/><line x1="867.80" y1="126.4" x2="867.80" y2="543.0" stroke="#131f13" stroke-width="1"/><line x1="872.63" y1="126.4" x2="872.63" y2="543.0" stroke="#131f13" stroke-width="1"/><line x1="877.46" y1="126.4" x2="877.46" y2="543.0" stroke="#131f13" stroke-width="1"/><line x1="286.5" y1="538.72" x2="877.5" y2="538.72" stroke="#131f13" stroke-width="1"/><line x1="286.5" y1="533.18" x2="877.5" y2="533.18" stroke="#131f13" stroke-width="1"/><line x1="286.5" y1="527.64" x2="877.5" y2="527.64" stroke="#131f13" stroke-width="1"/><line x1="286.5" y1="522.10" x2="877.5" y2="522.10" stroke="#131f13" stroke-width="1"/><line x1="286.5" y1="511.01" x2="877.5" y2="511.01" stroke="#131f13" stroke-width="1"/><line x1="286.5" y1="505.47" x2="877.5" y2="505.47" stroke="#131f13" stroke-width="1"/><line x1="286.5" y1="499.93" x2="877.5" y2="499.93" stroke="#131f13" stroke-width="1"/><line x1="286.5" y1="494.39" x2="877.5" y2="494.39" stroke="#131f13" stroke-width="1"/><line x1="286.5" y1="483.30" x2="877.5" y2="483.30" stroke="#131f13" stroke-width="1"/><line x1="286.5" y1="477.76" x2="877.5" y2="477.76" stroke="#131f13" stroke-width="1"/><line x1="286.5" y1="472.22" x2="877.5" y2="472.22" stroke="#131f13" stroke-width="1"/><line x1="286.5" y1="466.68" x2="877.5" y2="466.68" stroke="#131f13" stroke-width="1"/><line x1="286.5" y1="455.59" x2="877.5" y2="455.59" stroke="#131f13" stroke-width="1"/><line x1="286.5" y1="450.05" x2="877.5" y2="450.05" stroke="#131f13" stroke-width="1"/><line x1="286.5" y1="444.51" x2="877.5" y2="444.51" stroke="#131f13" stroke-width="1"/><line x1="286.5" y1="438.97" x2="877.5" y2="438.97" stroke="#131f13" stroke-width="1"/><line x1="286.5" y1="427.88" x2="877.5" y2="427.88" stroke="#131f13" stroke-width="1"/><line x1="286.5" y1="422.34" x2="877.5" y2="422.34" stroke="#131f13" stroke-width="1"/><line x1="286.5" y1="416.80" x2="877.5" y2="416.80" stroke="#131f13" stroke-width="1"/><line x1="286.5" y1="411.26" x2="877.5" y2="411.26" stroke="#131f13" stroke-width="1"/><line x1="286.5" y1="400.17" x2="877.5" y2="400.17" stroke="#131f13" stroke-width="1"/><line x1="286.5" y1="394.63" x2="877.5" y2="394.63" stroke="#131f13" stroke-width="1"/><line x1="286.5" y1="389.09" x2="877.5" y2="389.09" stroke="#131f13" stroke-width="1"/><line x1="286.5" y1="383.55" x2="877.5" y2="383.55" stroke="#131f13" stroke-width="1"/><line x1="286.5" y1="372.46" x2="877.5" y2="372.46" stroke="#131f13" stroke-width="1"/><line x1="286.5" y1="366.92" x2="877.5" y2="366.92" stroke="#131f13" stroke-width="1"/><line x1="286.5" y1="361.38" x2="877.5" y2="361.38" stroke="#131f13" stroke-width="1"/><line x1="286.5" y1="355.84" x2="877.5" y2="355.84" stroke="#131f13" stroke-width="1"/><line x1="286.5" y1="344.75" x2="877.5" y2="344.75" stroke="#131f13" stroke-width="1"/><line x1="286.5" y1="339.21" x2="877.5" y2="339.21" stroke="#131f13" stroke-width="1"/><line x1="286.5" y1="333.67" x2="877.5" y2="333.67" stroke="#131f13" stroke-width="1"/><line x1="286.5" y1="328.13" x2="877.5" y2="328.13" stroke="#131f13" stroke-width="1"/><line x1="286.5" y1="317.04" x2="877.5" y2="317.04" stroke="#131f13" stroke-width="1"/><line x1="286.5" y1="311.50" x2="877.5" y2="311.50" stroke="#131f13" stroke-width="1"/><line x1="286.5" y1="305.96" x2="877.5" y2="305.96" stroke="#131f13" stroke-width="1"/><line x1="286.5" y1="300.42" x2="877.5" y2="300.42" stroke="#131f13" stroke-width="1"/><line x1="286.5" y1="289.33" x2="877.5" y2="289.33" stroke="#131f13" stroke-width="1"/><line x1="286.5" y1="283.79" x2="877.5" y2="283.79" stroke="#131f13" stroke-width="1"/><line x1="286.5" y1="278.25" x2="877.5" y2="278.25" stroke="#131f13" stroke-width="1"/><line x1="286.5" y1="272.71" x2="877.5" y2="272.71" stroke="#131f13" stroke-width="1"/><line x1="286.5" y1="261.62" x2="877.5" y2="261.62" stroke="#131f13" stroke-width="1"/><line x1="286.5" y1="256.08" x2="877.5" y2="256.08" stroke="#131f13" stroke-width="1"/><line x1="286.5" y1="250.54" x2="877.5" y2="250.54" stroke="#131f13" stroke-width="1"/><line x1="286.5" y1="245.00" x2="877.5" y2="245.00" stroke="#131f13" stroke-width="1"/><line x1="286.5" y1="233.91" x2="877.5" y2="233.91" stroke="#131f13" stroke-width="1"/><line x1="286.5" y1="228.37" x2="877.5" y2="228.37" stroke="#131f13" stroke-width="1"/><line x1="286.5" y1="222.83" x2="877.5" y2="222.83" stroke="#131f13" stroke-width="1"/><line x1="286.5" y1="217.29" x2="877.5" y2="217.29" stroke="#131f13" stroke-width="1"/><line x1="286.5" y1="206.20" x2="877.5" y2="206.20" stroke="#131f13" stroke-width="1"/><line x1="286.5" y1="200.66" x2="877.5" y2="200.66" stroke="#131f13" stroke-width="1"/><line x1="286.5" y1="195.12" x2="877.5" y2="195.12" stroke="#131f13" stroke-width="1"/><line x1="286.5" y1="189.58" x2="877.5" y2="189.58" stroke="#131f13" stroke-width="1"/><line x1="286.5" y1="178.49" x2="877.5" y2="178.49" stroke="#131f13" stroke-width="1"/><line x1="286.5" y1="172.95" x2="877.5" y2="172.95" stroke="#131f13" stroke-width="1"/><line x1="286.5" y1="167.41" x2="877.5" y2="167.41" stroke="#131f13" stroke-width="1"/><line x1="286.5" y1="161.87" x2="877.5" y2="161.87" stroke="#131f13" stroke-width="1"/><line x1="286.5" y1="150.78" x2="877.5" y2="150.78" stroke="#131f13" stroke-width="1"/><line x1="286.5" y1="145.24" x2="877.5" y2="145.24" stroke="#131f13" stroke-width="1"/><line x1="286.5" y1="139.70" x2="877.5" y2="139.70" stroke="#131f13" stroke-width="1"/><line x1="286.5" y1="134.16" x2="877.5" y2="134.16" stroke="#131f13" stroke-width="1"/><line x1="312.70" y1="126.4" x2="312.70" y2="543.0" stroke="#3e543e" stroke-width="1"/><line x1="360.97" y1="126.4" x2="360.97" y2="543.0" stroke="#3e543e" stroke-width="1"/><line x1="409.24" y1="126.4" x2="409.24" y2="543.0" stroke="#3e543e" stroke-width="1"/><line x1="457.51" y1="126.4" x2="457.51" y2="543.0" stroke="#3e543e" stroke-width="1"/><line x1="505.78" y1="126.4" x2="505.78" y2="543.0" stroke="#3e543e" stroke-width="1"/><line x1="554.05" y1="126.4" x2="554.05" y2="543.0" stroke="#3e543e" stroke-width="1"/><line x1="602.32" y1="126.4" x2="602.32" y2="543.0" stroke="#3e543e" stroke-width="1"/><line x1="650.59" y1="126.4" x2="650.59" y2="543.0" stroke="#3e543e" stroke-width="1"/><line x1="698.86" y1="126.4" x2="698.86" y2="543.0" stroke="#3e543e" stroke-width="1"/><line x1="747.13" y1="126.4" x2="747.13" y2="543.0" stroke="#3e543e" stroke-width="1"/><line x1="795.40" y1="126.4" x2="795.40" y2="543.0" stroke="#3e543e" stroke-width="1"/><line x1="843.67" y1="126.4" x2="843.67" y2="543.0" stroke="#3e543e" stroke-width="1"/><line x1="286.5" y1="516.56" x2="877.5" y2="516.56" stroke="#3e543e" stroke-width="1"/><line x1="286.5" y1="488.85" x2="877.5" y2="488.85" stroke="#3e543e" stroke-width="1"/><line x1="286.5" y1="461.14" x2="877.5" y2="461.14" stroke="#3e543e" stroke-width="1"/><line x1="286.5" y1="433.43" x2="877.5" y2="433.43" stroke="#3e543e" stroke-width="1"/><line x1="286.5" y1="405.72" x2="877.5" y2="405.72" stroke="#3e543e" stroke-width="1"/><line x1="286.5" y1="378.01" x2="877.5" y2="378.01" stroke="#3e543e" stroke-width="1"/><line x1="286.5" y1="350.30" x2="877.5" y2="350.30" stroke="#3e543e" stroke-width="1"/><line x1="286.5" y1="322.59" x2="877.5" y2="322.59" stroke="#3e543e" stroke-width="1"/><line x1="286.5" y1="294.88" x2="877.5" y2="294.88" stroke="#3e543e" stroke-width="1"/><line x1="286.5" y1="267.17" x2="877.5" y2="267.17" stroke="#3e543e" stroke-width="1"/><line x1="286.5" y1="239.46" x2="877.5" y2="239.46" stroke="#3e543e" stroke-width="1"/><line x1="286.5" y1="211.75" x2="877.5" y2="211.75" stroke="#3e543e" stroke-width="1"/><line x1="286.5" y1="184.04" x2="877.5" y2="184.04" stroke="#3e543e" stroke-width="1"/><line x1="286.5" y1="156.33" x2="877.5" y2="156.33" stroke="#3e543e" stroke-width="1"/><line x1="286.5" y1="128.62" x2="877.5" y2="128.62" stroke="#3e543e" stroke-width="1"/><clipPath id="cp"><rect x="286.5" y="126.4" width="591.0" height="416.6"/></clipPath><g clip-path="url(#cp)"><polyline points="278.88,409.4 279.13,420.3 279.28,427.9 279.48,432.9 279.88,434.8 280.88,434.9 281.28,432.9 281.48,427.9 281.63,420.4 281.88,409.5 282.33,385.8 282.93,346.8 283.48,307.9 284.03,262.5 284.33,253.8 284.83,245.2 285.08,236.5 285.23,226.8 285.38,222.2 285.73,220.1 286.23,219.2 286.23,219.2 286.73,220.1 287.08,222.2 287.23,226.8 287.38,236.5 287.63,245.2 288.13,253.8 288.43,262.5 288.98,307.9 289.53,346.8 290.13,385.8 290.58,409.5 290.83,420.4 290.98,427.9 291.18,432.9 291.58,434.9 292.59,434.9 292.99,432.9 293.19,428.0 293.34,420.4 293.59,409.7 294.04,386.0 294.64,347.3 295.19,308.5 295.74,263.3 296.04,254.7 296.54,246.1 296.79,237.5 296.94,227.8 297.09,223.3 297.44,221.2 297.94,220.3 297.94,220.3 298.44,221.2 298.79,223.4 298.94,228.0 299.09,237.8 299.34,246.5 299.84,255.3 300.14,264.0 300.69,310.0 301.24,349.3 301.84,388.7 302.29,412.8 302.54,423.7 302.69,431.3 302.89,436.4 303.29,438.3 304.30,438.3 304.70,436.4 304.90,431.4 305.05,423.8 305.30,412.9 305.75,389.0 306.35,349.8 306.90,310.6 307.45,264.9 307.75,256.2 308.25,247.5 308.50,238.8 308.65,229.0 308.80,224.4 309.15,222.3 309.65,221.4 309.65,221.4 310.15,222.3 310.50,224.4 310.65,229.0 310.80,238.7 311.05,247.4 311.55,256.0 311.85,264.7 312.40,310.1 312.95,349.1 313.55,388.0 314.00,411.8 314.25,422.7 314.40,430.2 314.60,435.2 315.00,437.2 316.00,437.1 316.40,435.2 316.60,430.1 316.75,422.4 317.00,411.5 317.45,387.4 318.05,347.9 318.60,308.4 319.15,262.4 319.45,253.6 319.95,244.8 320.20,236.0 320.35,226.2 320.50,221.6 320.85,219.4 321.35,218.5 321.35,218.5 321.85,219.4 322.20,221.6 322.35,226.2 322.50,236.1 322.75,245.0 323.25,253.8 323.55,262.6 324.10,308.9 324.65,348.6 325.25,388.3 325.70,412.5 325.95,423.6 326.10,431.3 326.30,436.4 326.70,438.3 327.71,438.3 328.11,436.3 328.31,431.2 328.46,423.3 328.71,412.1 329.16,387.5 329.76,347.2 330.31,306.8 330.86,259.8 331.16,250.8 331.66,241.9 331.91,232.9 332.06,222.8 332.21,218.1 332.56,215.9 333.06,215.0 333.06,215.0 333.56,215.9 333.91,218.1 334.06,222.8 334.21,232.9 334.46,241.9 334.96,250.8 335.26,259.8 335.81,306.8 336.36,347.2 336.96,387.5 337.41,412.1 337.66,423.3 337.81,431.2 338.01,436.3 338.41,438.3 339.41,438.3 339.81,436.4 340.01,431.3 340.16,423.6 340.41,412.5 340.86,388.3 341.46,348.6 342.01,308.9 342.56,262.6 342.86,253.8 343.36,245.0 343.61,236.1 343.76,226.2 343.91,221.6 344.26,219.4 344.76,218.5 344.76,218.5 345.26,219.4 345.61,221.6 345.76,226.2 345.91,236.0 346.16,244.8 346.66,253.6 346.96,262.4 347.51,308.4 348.06,347.9 348.66,387.4 349.11,411.5 349.36,422.4 349.51,430.1 349.71,435.2 350.11,437.1 351.12,437.1 351.52,435.1 351.72,430.1 351.87,422.3 352.12,411.3 352.57,386.9 353.17,347.1 353.72,307.4 354.27,260.9 354.57,252.1 355.07,243.2 355.32,234.4 355.47,224.4 355.62,219.8 355.97,217.6 356.47,216.7 356.47,216.7 356.97,217.6 357.32,219.8 357.47,224.4 357.62,234.3 357.87,243.1 358.37,251.9 358.67,260.8 359.22,307.0 359.77,346.7 360.37,386.3 360.82,410.6 361.07,421.6 361.22,429.3 361.42,434.4 361.82,436.3 362.83,436.3 363.23,434.4 363.43,429.3 363.58,421.6 363.83,410.6 364.28,386.3 364.88,346.7 365.43,307.0 365.98,260.8 366.28,251.9 366.78,243.1 367.03,234.3 367.18,224.4 367.33,219.8 367.68,217.6 368.18,216.7 368.18,216.7 368.68,217.6 369.03,219.8 369.18,224.4 369.33,234.4 369.58,243.2 370.08,252.1 370.38,260.9 370.93,307.4 371.48,347.1 372.08,386.9 372.53,411.3 372.78,422.3 372.93,430.1 373.13,435.1 373.53,437.1 374.53,437.1 374.93,435.2 375.13,430.1 375.28,422.4 375.53,411.3 375.98,387.1 376.58,347.4 377.13,307.7 377.68,261.4 377.98,252.6 378.48,243.8 378.73,234.9 378.88,225.0 379.03,220.4 379.38,218.2 379.88,217.3 379.88,217.3 380.42,218.4 380.80,221.0 380.96,226.6 381.12,238.5 381.39,249.1 381.93,259.7 382.25,270.3 382.84,325.9 383.43,373.6 384.08,421.3 384.56,450.4 384.83,463.7 384.99,472.9 385.21,479.0 385.64,481.4 386.18,482.2 386.70,472.8 387.22,457.1 387.74,432.1 390.64,405.8 398.00,300.6 398.83,263.0 401.01,219.2 402.15,194.1 402.36,181.6 402.78,172.2 403.29,169.1 403.29,169.1 403.79,170.2 404.14,172.9 404.29,178.6 404.44,190.8 404.69,201.7 405.19,212.5 405.49,223.4 406.04,280.5 406.59,329.4 407.19,378.3 407.64,408.2 407.89,421.8 408.04,431.3 408.24,437.5 408.64,440.0 409.65,440.1 410.05,438.1 410.25,432.8 410.40,424.9 410.65,413.5 411.10,388.5 411.70,347.6 412.25,306.7 412.80,259.0 413.10,249.9 413.60,240.8 413.85,231.7 414.00,221.5 414.15,216.7 414.50,214.4 415.00,213.5 415.00,213.5 415.50,214.4 415.85,216.7 416.00,221.5 416.15,231.8 416.40,241.0 416.90,250.2 417.20,259.4 417.75,307.5 418.30,348.8 418.90,390.1 419.35,415.3 419.60,426.7 419.75,434.8 419.95,440.0 420.35,442.1 421.36,442.1 421.76,440.0 421.96,434.8 422.11,426.7 422.36,415.3 422.81,390.1 423.41,348.8 423.96,307.5 424.51,259.4 424.81,250.2 425.31,241.0 425.56,231.8 425.71,221.5 425.86,216.7 426.21,214.4 426.71,213.5 426.71,213.5 427.21,214.4 427.56,216.7 427.71,221.6 427.86,231.9 428.11,241.1 428.61,250.3 428.91,259.5 429.46,307.9 430.01,349.3 430.61,390.8 431.06,416.1 431.31,427.6 431.46,435.6 431.66,440.9 432.06,443.0 433.06,443.0 433.46,440.9 433.66,435.6 433.81,427.4 434.06,415.8 434.51,390.3 435.11,348.5 435.66,306.7 436.21,257.9 436.51,248.7 437.01,239.4 437.26,230.1 437.41,219.6 437.56,214.8 437.91,212.4 438.41,211.5 438.41,211.5 438.91,212.4 439.26,214.8 439.41,219.7 439.56,230.2 439.81,239.6 440.31,249.0 440.61,258.4 441.16,307.6 441.71,349.7 442.31,391.9 442.76,417.7 443.01,429.4 443.16,437.6 443.36,443.0 443.76,445.1 444.77,445.1 445.17,443.0 445.37,437.8 445.52,429.7 445.77,418.3 446.22,393.1 446.82,351.8 447.37,310.5 447.92,262.4 448.22,253.2 448.72,244.0 448.97,234.8 449.12,224.5 449.27,219.7 449.62,217.4 450.12,216.5 450.12,216.5 450.62,217.4 450.97,219.7 451.12,224.5 451.27,234.7 451.52,243.8 452.02,252.9 452.32,262.1 452.87,309.9 453.42,350.9 454.02,391.9 454.47,417.0 454.72,428.4 454.87,436.3 455.07,441.6 455.47,443.6 456.47,443.6 456.87,441.6 457.07,436.3 457.22,428.3 457.47,416.9 457.92,391.7 458.52,350.5 459.07,309.4 459.62,261.3 459.92,252.2 460.42,243.0 460.67,233.9 460.82,223.6 460.97,218.8 461.32,216.5 461.82,215.6 461.82,215.6 462.32,216.5 462.67,218.8 462.82,223.6 462.97,233.9 463.22,243.1 463.72,252.3 464.02,261.4 464.57,309.6 465.12,350.8 465.72,392.1 466.17,417.3 466.42,428.8 466.57,436.8 466.77,442.0 467.17,444.1 468.18,444.1 468.58,442.0 468.78,436.7 468.93,428.6 469.18,417.0 469.63,391.6 470.23,350.0 470.78,308.3 471.33,259.8 471.63,250.5 472.13,241.3 472.38,232.0 472.53,221.6 472.68,216.7 473.03,214.4 473.53,213.5 473.53,213.5 474.03,214.4 474.38,216.8 474.53,221.6 474.68,232.1 474.93,241.4 475.43,250.7 475.73,260.0 476.28,308.7 476.83,350.6 477.43,392.4 477.88,417.9 478.13,429.5 478.28,437.7 478.48,443.0 478.88,445.1 479.89,445.1 480.29,443.0 480.49,437.7 480.64,429.6 480.89,418.1 481.34,392.7 481.94,351.2 482.49,309.6 483.04,261.2 483.34,251.9 483.84,242.7 484.09,233.5 484.24,223.1 484.39,218.2 484.74,215.9 485.24,215.0 485.24,215.0 485.74,215.9 486.09,218.2 486.24,223.0 486.39,233.2 486.64,242.3 487.14,251.4 487.44,260.6 487.99,308.4 488.54,349.4 489.14,390.4 489.59,415.5 489.84,426.9 489.99,434.8 490.19,440.1 490.59,442.1 491.59,442.1 491.99,440.1 492.19,434.8 492.34,426.9 492.59,415.5 493.04,390.4 493.64,349.4 494.19,308.4 494.74,260.6 495.04,251.4 495.54,242.3 495.79,233.2 495.94,223.0 496.09,218.2 496.44,215.9 496.94,215.0 496.94,215.0 497.44,215.9 497.79,218.1 497.94,222.9 498.09,233.0 498.34,242.0 498.84,251.0 499.14,260.0 499.69,307.2 500.24,347.6 500.84,388.1 501.29,412.8 501.54,424.1 501.69,431.9 501.89,437.1 502.29,439.1 503.30,439.1 503.70,437.1 503.90,431.9 504.05,424.0 504.30,412.6 504.75,387.8 505.35,347.0 505.90,306.3 506.45,258.8 506.75,249.7 507.25,240.7 507.50,231.6 507.65,221.4 507.80,216.7 508.15,214.4 508.65,213.5 508.65,213.5 509.15,214.4 509.50,216.6 509.65,221.4 509.80,231.5 510.05,240.5 510.55,249.5 510.85,258.5 511.40,305.7 511.95,346.2 512.55,386.7 513.00,411.4 513.25,422.7 513.40,430.5 513.60,435.7 514.00,437.7 515.00,437.7 515.40,435.7 515.60,430.7 515.75,422.9 516.00,411.9 516.45,387.5 517.05,347.7 517.60,308.0 518.15,261.5 518.45,252.7 518.95,243.8 519.20,235.0 519.35,225.0 519.50,220.4 519.85,218.2 520.35,217.3 520.35,217.3 520.85,218.2 521.20,220.4 521.35,225.0 521.50,235.0 521.75,243.8 522.25,252.7 522.55,261.5 523.10,308.0 523.65,347.7 524.25,387.5 524.70,411.9 524.95,422.9 525.10,430.7 525.30,435.7 525.70,437.7 526.71,437.7 527.11,435.7 527.31,430.7 527.46,422.9 527.71,411.9 528.16,387.5 528.76,347.7 529.31,308.0 529.86,261.5 530.16,252.7 530.66,243.8 530.91,235.0 531.06,225.0 531.21,220.4 531.56,218.2 532.06,217.3 532.06,217.3 532.56,218.2 532.91,220.4 533.06,225.0 533.21,234.9 533.46,243.7 533.96,252.5 534.26,261.2 534.81,307.4 535.36,346.9 535.96,386.5 536.41,410.6 536.66,421.6 536.81,429.3 537.01,434.4 537.41,436.3 538.42,436.3 538.82,434.4 539.02,429.4 539.17,421.7 539.42,410.8 539.87,386.7 540.47,347.4 541.02,308.1 541.57,262.2 541.87,253.5 542.37,244.7 542.62,236.0 542.77,226.1 542.92,221.6 543.27,219.4 543.77,218.5 543.77,218.5 544.27,219.4 544.62,221.6 544.77,226.2 544.92,236.0 545.17,244.8 545.67,253.6 545.97,262.4 546.52,308.4 547.07,347.9 547.67,387.4 548.12,411.5 548.37,422.4 548.52,430.1 548.72,435.2 549.12,437.1 550.12,437.2 550.52,435.2 550.72,430.3 550.87,422.8 551.12,412.0 551.57,388.4 552.17,349.8 552.72,311.2 553.27,266.1 553.57,257.5 554.07,249.0 554.32,240.4 554.47,230.7 554.62,226.2 554.97,224.1 555.47,223.2 555.47,223.2 555.97,224.1 556.32,226.2 556.47,230.7 556.62,240.4 556.87,249.0 557.37,257.5 557.67,266.1 558.22,311.2 558.77,349.8 559.37,388.4 559.82,412.0 560.07,422.8 560.22,430.3 560.42,435.2 560.82,437.2 561.83,437.2 562.23,435.2 562.43,430.3 562.58,422.7 562.83,411.9 563.28,388.2 563.88,349.4 564.43,310.7 564.98,265.4 565.28,256.8 565.78,248.2 566.03,239.5 566.18,229.8 566.33,225.3 566.68,223.2 567.18,222.3 567.18,222.3 567.68,223.2 568.03,225.3 568.18,229.8 568.33,239.5 568.58,248.1 569.08,256.7 569.38,265.2 569.93,310.3 570.48,349.0 571.08,387.6 571.53,411.2 571.78,422.0 571.93,429.5 572.13,434.4 572.53,436.4 573.53,436.3 573.93,434.4 574.13,429.4 574.28,421.8 574.53,410.9 574.98,387.0 575.58,347.8 576.13,308.6 576.68,262.9 576.98,254.2 577.48,245.5 577.73,236.8 577.88,227.0 578.03,222.4 578.38,220.3 578.88,219.4 578.88,219.4 579.38,220.3 579.73,222.5 579.88,227.1 580.03,236.9 580.28,245.7 580.78,254.4 581.08,263.2 581.63,309.2 582.18,348.6 582.78,388.0 583.23,412.1 583.48,423.1 583.63,430.7 583.83,435.8 584.23,437.7 585.24,437.7 585.64,435.8 585.84,430.7 585.99,423.1 586.24,412.1 586.69,388.0 587.29,348.6 587.84,309.2 588.39,263.2 588.69,254.4 589.19,245.7 589.44,236.9 589.59,227.1 589.74,222.5 590.09,220.3 590.59,219.4 590.59,219.4 591.09,220.3 591.44,222.4 591.59,227.0 591.74,236.8 591.99,245.5 592.49,254.2 592.79,262.9 593.34,308.6 593.89,347.8 594.49,387.0 594.94,410.9 595.19,421.8 595.34,429.4 595.54,434.4 595.94,436.3 596.95,436.3 597.35,434.4 597.55,429.4 597.70,421.8 597.95,411.0 598.40,387.2 599.00,348.2 599.55,309.1 600.10,263.6 600.40,255.0 600.90,246.3 601.15,237.6 601.30,227.9 601.45,223.3 601.80,221.2 602.30,220.3 602.30,220.3 602.80,221.2 603.15,223.3 603.30,227.8 603.45,237.4 603.70,246.0 604.20,254.5 604.50,263.1 605.05,308.0 605.60,346.4 606.20,384.9 606.65,408.4 606.90,419.1 607.05,426.6 607.25,431.5 607.65,433.5 608.65,433.5 609.05,431.5 609.25,426.6 609.40,419.1 609.65,408.3 610.10,384.7 610.70,346.1 611.25,307.4 611.80,262.3 612.10,253.8 612.60,245.2 612.85,236.6 613.00,226.9 613.15,222.4 613.50,220.3 614.00,219.4 614.00,219.4 614.50,220.3 614.85,222.4 615.00,227.0 615.15,236.7 615.40,245.3 615.90,254.0 616.20,262.6 616.75,308.0 617.30,346.9 617.90,385.8 618.35,409.6 618.60,420.4 618.75,427.9 618.95,432.9 619.35,434.9 620.36,434.9 620.76,432.9 620.96,428.0 621.11,420.6 621.36,409.9 621.81,386.5 622.41,348.1 622.96,309.7 623.51,264.9 623.81,256.4 624.31,247.9 624.56,239.4 624.71,229.8 624.86,225.3 625.21,223.2 625.71,222.3 625.71,222.3 626.21,223.1 626.56,225.3 626.71,229.7 626.86,239.2 627.11,247.6 627.61,256.0 627.91,264.5 628.46,308.8 629.01,346.7 629.61,384.7 630.06,407.9 630.31,418.4 630.46,425.8 630.66,430.7 631.06,432.6 632.06,432.6 632.46,430.7 632.66,425.8 632.81,418.4 633.06,407.9 633.51,384.7 634.11,346.7 634.66,308.8 635.21,264.5 635.51,256.0 636.01,247.6 636.26,239.2 636.41,229.7 636.56,225.3 636.91,223.1 637.41,222.3 637.41,222.3 637.91,223.2 638.26,225.3 638.41,229.8 638.56,239.4 638.81,247.9 639.31,256.4 639.61,264.9 640.16,309.7 640.71,348.1 641.31,386.5 641.76,409.9 642.01,420.6 642.16,428.0 642.36,432.9 642.76,434.9 643.77,434.8 644.17,432.9 644.37,427.9 644.52,420.3 644.77,409.4 645.22,385.5 645.82,346.3 646.37,307.1 646.92,261.4 647.22,252.7 647.72,244.0 647.97,235.3 648.12,225.5 648.27,220.9 648.62,218.8 649.12,217.9 649.12,217.9 649.62,218.8 649.97,221.0 650.12,225.6 650.27,235.5 650.52,244.3 651.02,253.1 651.32,261.9 651.87,308.1 652.42,347.6 653.02,387.2 653.47,411.4 653.72,422.4 653.87,430.1 654.07,435.2 654.47,437.1 655.48,437.2 655.88,435.2 656.08,430.3 656.23,422.9 656.48,412.2 656.93,388.7 657.53,350.3 658.08,311.9 658.63,267.1 658.93,258.5 659.43,250.0 659.68,241.5 659.83,231.9 659.98,227.4 660.33,225.3 660.83,224.4 660.83,224.4 661.33,225.2 661.68,227.4 661.83,231.8 661.98,241.3 662.23,249.7 662.73,258.2 663.03,266.6 663.58,311.0 664.13,348.9 664.73,386.9 665.18,410.2 665.43,420.7 665.58,428.1 665.78,433.0 666.18,434.9 667.18,434.9 667.58,432.9 667.78,428.0 667.93,420.5 668.18,409.7 668.63,386.1 669.23,347.5 669.78,308.8 670.33,263.7 670.63,255.2 671.13,246.6 671.38,238.0 671.53,228.3 671.68,223.8 672.03,221.7 672.53,220.8 672.53,220.8 673.03,221.7 673.38,223.8 673.53,228.4 673.68,238.1 673.93,246.7 674.43,255.4 674.73,264.0 675.28,309.4 675.83,348.4 676.43,387.3 676.88,411.1 677.13,421.9 677.28,429.4 677.48,434.4 677.88,436.4 678.89,436.3 679.29,434.4 679.49,429.4 679.64,421.8 679.89,410.9 680.34,387.0 680.94,347.8 681.49,308.6 682.04,262.9 682.34,254.2 682.84,245.5 683.09,236.8 683.24,227.0 683.39,222.4 683.74,220.3 684.24,219.4 684.24,219.4 684.74,220.3 685.09,222.5 685.24,227.0 685.39,236.9 685.64,245.6 686.14,254.3 686.44,263.1 686.99,308.9 687.54,348.3 688.14,387.6 688.59,411.6 688.84,422.5 688.99,430.2 689.19,435.2 689.59,437.1 690.59,437.1 690.99,435.2 691.19,430.1 691.34,422.4 691.59,411.5 692.04,387.4 692.64,347.9 693.19,308.4 693.74,262.4 694.04,253.6 694.54,244.8 694.79,236.0 694.94,226.2 695.09,221.6 695.44,219.4 695.94,218.5 695.94,218.5 696.44,219.4 696.79,221.5 696.94,226.1 697.09,235.9 697.34,244.6 697.84,253.3 698.14,262.0 698.69,307.7 699.24,346.9 699.84,386.1 700.29,410.0 700.54,420.9 700.69,428.5 700.89,433.5 701.29,435.4 702.30,435.4 702.70,433.5 702.90,428.5 703.05,420.9 703.30,410.1 703.75,386.3 704.35,347.3 704.90,308.2 705.45,262.7 705.75,254.1 706.25,245.4 706.50,236.7 706.65,227.0 706.80,222.4 707.15,220.3 707.65,219.4 707.65,219.4 708.15,220.3 708.50,222.4 708.65,227.0 708.80,236.7 709.05,245.4 709.55,254.1 709.85,262.7 710.40,308.2 710.95,347.3 711.55,386.3 712.00,410.1 712.25,420.9 712.40,428.5 712.60,433.5 713.00,435.4 714.01,435.4 714.41,433.5 714.61,428.5 714.76,420.8 715.01,409.9 715.46,385.9 716.06,346.6 716.61,307.4 717.16,261.5 717.46,252.8 717.96,244.1 718.21,235.4 718.36,225.5 718.51,221.0 718.86,218.8 719.36,217.9 719.36,217.9 719.86,218.8 720.21,221.0 720.36,225.6 720.51,235.4 720.76,244.2 721.26,253.0 721.56,261.7 722.11,307.7 722.66,347.2 723.26,386.6 723.71,410.7 723.96,421.7 724.11,429.3 724.31,434.4 724.71,436.3 725.71,436.3 726.11,434.4 726.31,429.4 726.46,421.7 726.71,410.8 727.16,386.7 727.76,347.4 728.31,308.1 728.86,262.2 729.16,253.5 729.66,244.7 729.91,236.0 730.06,226.1 730.21,221.6 730.56,219.4 731.06,218.5 731.06,218.5 731.56,219.4 731.91,221.6 732.06,226.1 732.21,236.0 732.46,244.7 732.96,253.5 733.26,262.2 733.81,308.1 734.36,347.4 734.96,386.7 735.41,410.8 735.66,421.7 735.81,429.4 736.01,434.4 736.41,436.3 737.42,436.3 737.82,434.4 738.02,429.3 738.17,421.6 738.42,410.6 738.87,386.5 739.47,346.9 740.02,307.4 740.57,261.2 740.87,252.5 741.37,243.7 741.62,234.9 741.77,225.0 741.92,220.4 742.27,218.2 742.77,217.3 742.77,217.3 743.27,218.2 743.62,220.4 743.77,225.0 743.92,234.8 744.17,243.6 744.67,252.3 744.97,261.1 745.52,307.0 746.07,346.4 746.67,385.8 747.12,409.8 747.37,420.8 747.52,428.4 747.72,433.5 748.12,435.4 749.12,435.4 749.52,433.4 749.72,428.4 749.87,420.6 750.12,409.6 750.57,385.2 751.17,345.4 751.72,305.7 752.27,259.2 752.57,250.4 753.07,241.5 753.32,232.7 753.47,222.7 753.62,218.1 753.97,215.9 754.47,215.0 754.47,215.0 754.97,215.9 755.32,218.1 755.47,222.9 755.62,233.0 755.87,242.0 756.37,251.0 756.67,260.0 757.22,307.2 757.77,347.6 758.37,388.1 758.82,412.8 759.07,424.1 759.22,431.9 759.42,437.1 759.82,439.1 760.83,439.1 761.23,437.1 761.43,432.1 761.58,424.3 761.83,413.2 762.28,388.9 762.88,349.1 763.43,309.2 763.98,262.8 764.28,253.9 764.78,245.1 765.03,236.2 765.18,226.2 765.33,221.6 765.68,219.4 766.18,218.5 766.18,218.5 766.68,219.4 767.03,221.6 767.18,226.2 767.33,236.2 767.58,245.1 768.08,253.9 768.38,262.8 768.93,309.2 769.48,349.1 770.08,388.9 770.53,413.2 770.78,424.3 770.93,432.1 771.13,437.1 771.53,439.1 772.54,439.1 772.94,437.1 773.14,432.0 773.29,424.3 773.54,413.2 773.99,388.8 774.59,348.8 775.14,308.9 775.69,262.3 775.99,253.4 776.49,244.5 776.74,235.7 776.89,225.7 777.04,221.0 777.39,218.8 777.89,217.9 777.89,217.9 778.39,218.8 778.74,221.0 778.89,225.7 779.04,235.8 779.29,244.7 779.79,253.7 780.09,262.6 780.64,309.5 781.19,349.8 781.79,390.0 782.24,414.6 782.49,425.8 782.64,433.6 782.84,438.7 783.24,440.7 784.24,440.7 784.64,438.7 784.84,433.6 784.99,425.7 785.24,414.5 785.69,389.9 786.29,349.5 786.84,309.2 787.39,262.1 787.69,253.2 788.19,244.2 788.44,235.2 788.59,225.1 788.74,220.4 789.09,218.2 789.59,217.3 789.59,217.3 790.09,218.2 790.44,220.4 790.59,225.1 790.74,235.2 790.99,244.2 791.49,253.2 791.79,262.1 792.34,309.2 792.89,349.5 793.49,389.9 793.94,414.5 794.19,425.7 794.34,433.6 794.54,438.7 794.94,440.7 795.95,440.7 796.35,438.7 796.55,433.5 796.70,425.7 796.95,414.4 797.40,389.7 798.00,349.2 798.55,308.7 799.10,261.5 799.40,252.5 799.90,243.5 800.15,234.5 800.30,224.4 800.45,219.6 800.80,217.4 801.30,216.5 801.30,216.5 801.84,217.6 802.21,220.2 802.37,225.8 802.54,237.8 802.80,248.4 803.34,259.0 803.67,269.6 804.26,325.4 804.85,373.3 805.50,421.1 805.98,450.3 806.25,463.6 806.41,472.9 806.63,479.0 807.06,481.4 807.60,482.2 808.12,472.8 808.64,457.1 809.15,432.1 812.06,405.8 819.42,300.6 820.25,263.0 822.43,219.2 823.57,194.1 823.78,181.6 824.19,172.2 824.71,169.1 824.71,169.1 825.21,170.2 825.56,172.9 825.71,178.5 825.86,190.7 826.11,201.5 826.61,212.3 826.91,223.1 827.46,279.7 828.01,328.3 828.61,376.9 829.06,406.6 829.31,420.1 829.46,429.6 829.66,435.8 830.06,438.2 831.07,438.3 831.47,436.3 831.67,431.1 831.82,423.2 832.07,411.8 832.52,386.9 833.12,346.2 833.67,305.4 834.22,257.9 834.52,248.8 835.02,239.8 835.27,230.7 835.42,220.5 835.57,215.8 835.92,213.5 836.42,212.6 836.42,212.6 836.92,213.5 837.27,215.8 837.42,220.6 837.57,230.8 837.82,239.9 838.32,249.0 838.62,258.1 839.17,305.8 839.72,346.7 840.32,387.6 840.77,412.6 841.02,424.0 841.17,431.9 841.37,437.2 841.77,439.2 842.77,439.2 843.17,437.2 843.37,432.0 843.52,424.1 843.77,412.8 844.22,388.0 844.82,347.4 845.37,306.9 845.92,259.5 846.22,250.5 846.72,241.5 846.97,232.4 847.12,222.3 847.27,217.6 847.62,215.3 848.12,214.4 848.12,214.4 848.62,215.3 848.97,217.6 849.12,222.3 849.27,232.4 849.52,241.5 850.02,250.5 850.32,259.5 850.87,306.9 851.42,347.4 852.02,388.0 852.47,412.8 852.72,424.1 852.87,432.0 853.07,437.2 853.47,439.2 854.48,439.2 854.88,437.2 855.08,431.9 855.23,423.9 855.48,412.5 855.93,387.4 856.53,346.3 857.08,305.1 857.63,257.2 857.93,248.0 858.43,238.9 858.68,229.8 858.83,219.5 858.98,214.7 859.33,212.4 859.83,211.5 859.83,211.5 860.33,212.4 860.68,214.7 860.83,219.5 860.98,229.8 861.23,238.9 861.73,248.0 862.03,257.2 862.58,305.1 863.13,346.3 863.73,387.4 864.18,412.5 864.43,423.9 864.58,431.9 864.78,437.2 865.18,439.2 866.18,439.2 866.58,437.2 866.78,432.0 866.93,424.2 867.18,412.9 867.63,388.2 868.23,347.7 868.78,307.2 869.33,260.0 869.63,251.0 870.13,242.0 870.38,233.0 870.53,222.9 870.68,218.1 871.03,215.9 871.53,215.0 871.53,215.0 872.03,215.9 872.38,218.1 872.53,222.9 872.68,233.0 872.93,242.0 873.43,251.0 873.73,260.0 874.28,307.2 874.83,347.6 875.43,388.1 875.88,412.8 876.13,424.1 876.28,431.9 876.48,437.1 876.88,439.1 877.89,439.1 878.29,437.1 878.49,431.9 878.64,424.1 878.89,412.8 879.34,388.1 879.94,347.7 880.49,307.3 881.04,260.1 881.34,251.1 881.84,242.2 882.09,233.2 882.24,223.1 882.39,218.3 882.74,216.1 883.24,215.2 883.24,215.2 883.74,216.1 884.09,218.3 884.24,223.1 884.39,233.2 884.64,242.2 885.14,251.1 885.44,260.1" fill="none" stroke="#e45e5e" stroke-width="1.6" stroke-linejoin="round"/><polyline points="286.00,404.9 286.50,405.1 287.00,405.8 287.50,404.9 288.00,405.0 288.50,405.2 289.00,404.4 289.50,405.0 290.00,405.2 290.50,405.5 291.00,404.3 291.50,404.6 292.00,404.3 292.50,405.6 293.00,405.3 293.50,404.2 294.00,405.9 294.50,405.8 295.00,405.3 295.50,405.2 296.00,404.4 296.50,404.1 297.00,405.1 297.50,404.2 298.00,404.4 298.50,404.5 299.00,404.2 299.50,404.9 300.00,404.9 300.50,405.6 301.00,405.0 301.50,405.3 302.00,405.0 302.50,405.3 303.00,404.9 303.50,404.6 304.00,405.9 304.50,405.9 305.00,405.6 305.50,405.4 306.00,404.7 306.50,404.5 307.00,404.6 307.50,404.2 308.00,405.5 308.50,404.8 309.00,405.6 309.50,404.8 310.00,405.8 310.50,405.6 311.00,404.1 311.50,404.5 312.00,405.7 312.50,404.9 313.00,405.9 313.50,404.8 314.00,404.2 314.50,405.2 315.00,405.5 315.50,404.6 316.00,404.3 316.50,404.7 317.00,405.8 317.50,405.5 318.00,404.3 318.50,404.5 319.00,404.3 319.50,404.2 320.00,405.5 320.50,404.4 321.00,405.1 321.50,404.9 322.00,404.4 322.50,405.4 323.00,404.3 323.50,405.3 324.00,404.3 324.50,404.9 325.00,404.5 325.50,404.6 326.00,405.8 326.50,405.5 327.00,404.6 327.50,405.7 328.00,404.5 328.50,404.8 329.00,405.6 329.50,405.3 330.00,404.3 330.50,405.9 331.00,404.3 331.50,403.3 332.00,403.1 332.50,401.2 333.00,402.2 333.50,402.9 334.00,404.0 334.50,406.4 335.00,407.4 335.50,409.7 336.00,407.7 336.50,406.2 337.00,405.8 337.50,405.0 338.00,405.1 338.50,405.7 339.00,404.4 339.50,404.4 340.00,405.7 340.50,405.6 341.00,404.5 341.50,404.4 342.00,405.4 342.50,405.8 343.00,404.5 343.50,405.8 344.00,405.7 344.50,405.2 345.00,404.9 345.50,404.3 346.00,404.2 346.50,405.8 347.00,404.5 347.50,405.4 348.00,404.6 348.50,405.6 349.00,405.2 349.50,404.6 350.00,404.4 350.50,405.4 351.00,404.2 351.50,404.5 352.00,405.1 352.50,405.6 353.00,405.2 353.50,404.6 354.00,405.8 354.50,404.5 355.00,404.1 355.50,404.6 356.00,404.9 356.50,404.2 357.00,404.4 357.50,404.8 358.00,405.1 358.50,404.3 359.00,404.8 359.50,405.7 360.00,405.9 360.50,405.3 361.00,405.3 361.50,405.2 362.00,404.4 362.50,404.2 363.00,404.1 363.50,405.7 364.00,405.4 364.50,405.8 365.00,404.1 365.50,405.2 366.00,405.0 366.50,405.4 367.00,404.7 367.50,405.9 368.00,404.2 368.50,405.1 369.00,405.4 369.50,405.7 370.00,405.4 370.50,405.4 371.00,405.5 371.50,405.7 372.00,404.7 372.50,405.3 373.00,405.7 373.50,405.7 374.00,404.9 374.50,405.5 375.00,405.7 375.50,405.1 376.00,405.2 376.50,404.8 377.00,405.1 377.50,405.2 378.00,404.2 378.50,405.3 379.00,405.9 379.50,405.7 380.00,405.4 380.50,404.8 381.00,405.4 381.50,405.1 382.00,404.9 382.50,405.6 383.00,404.3 383.50,405.5 384.00,404.2 384.50,405.2 385.00,405.0 385.50,404.5 386.00,405.4 386.50,405.0 387.00,405.2 387.50,405.8 388.00,404.6 388.50,404.1 389.00,404.6 389.50,405.3 390.00,404.5 390.50,404.4 391.00,405.7 391.50,405.3 392.00,404.9 392.50,405.7 393.00,404.7 393.50,405.3 394.00,404.5 394.50,404.9 395.00,405.6 395.50,405.7 396.00,405.7 396.50,404.8 397.00,405.1 397.50,404.7 398.00,404.3 398.50,405.0 399.00,405.6 399.50,405.6 400.00,405.4 400.50,405.8 401.00,404.6 401.50,404.4 402.00,404.9 402.50,404.6 403.00,404.5 403.50,404.8 404.00,405.2 404.50,405.0 405.00,404.7 405.50,405.6 406.00,405.9 406.50,404.9 407.00,404.2 407.50,404.2 408.00,405.7 408.50,404.2 409.00,405.4 409.50,405.1 410.00,404.7 410.51,405.5 411.04,404.1 411.59,404.4 412.14,404.9 412.70,404.2 413.26,405.6 413.82,404.6 414.38,404.4 414.92,404.2 415.44,405.3 415.94,404.9 416.42,405.3 416.87,405.3 417.29,405.6 417.66,405.8 418.00,405.3 418.83,404.4 419.12,404.7 419.36,404.0 420.00,403.6 420.36,404.4 420.77,404.8 421.22,403.8 421.70,404.0 422.22,404.1 422.75,404.7 423.30,404.4 423.85,404.5 424.41,404.8 424.95,404.1 425.49,404.8 426.00,404.9 426.49,403.4 426.98,404.9 427.45,404.5 427.93,403.4 428.40,404.0 428.88,404.2 429.36,404.7 429.85,403.7 430.36,404.0 430.88,404.4 431.43,404.2 432.00,404.3 432.45,403.3 432.92,403.5 433.40,402.6 433.90,403.3 434.41,403.4 434.93,402.9 435.46,402.8 435.99,401.7 436.52,402.0 437.04,401.8 437.57,401.6 438.08,401.4 438.58,401.2 439.07,401.0 439.55,400.7 440.00,400.5 440.58,400.2 441.14,399.9 441.68,399.7 442.20,399.4 442.71,399.2 443.21,398.9 443.71,398.6 444.20,398.2 444.69,397.8 445.19,397.3 445.69,396.7 446.20,396.0 446.72,395.2 447.23,394.4 447.75,393.5 448.27,392.6 448.78,391.5 449.30,390.5 449.82,389.3 450.33,388.2 450.85,386.9 451.37,385.7 451.88,384.4 452.40,383.0 452.92,381.6 453.45,380.1 453.98,378.6 454.51,377.0 455.04,375.4 455.57,373.7 456.09,372.0 456.61,370.3 457.13,368.5 457.63,366.7 458.12,364.9 458.60,363.0 459.16,360.7 459.72,358.2 460.27,355.7 460.82,353.1 461.34,350.4 461.86,347.8 462.35,345.3 462.83,342.8 463.28,340.5 463.70,338.3 464.33,335.0 464.88,332.0 465.38,329.3 465.84,326.7 466.31,324.2 466.80,321.8 467.32,319.4 467.86,317.0 468.39,314.8 468.92,312.8 469.42,311.0 469.90,309.5 470.54,308.0 471.12,307.1 471.70,306.6 472.30,306.5 472.83,306.6 473.39,306.9 473.95,307.5 474.49,308.3 475.00,309.4 475.54,311.0 476.02,313.0 476.52,315.5 477.10,318.5 477.57,320.9 478.10,323.7 478.65,326.6 479.20,329.8 479.73,333.0 480.20,336.2 480.80,341.1 481.32,346.2 481.81,351.5 482.30,356.9 482.80,362.6 483.30,368.5 483.80,374.4 484.30,380.0 484.82,385.3 485.34,390.5 485.87,395.5 486.40,400.0 486.91,403.8 487.41,407.0 487.93,410.3 488.50,414.5 489.00,418.6 489.52,423.0 490.07,427.9 490.66,433.0 491.30,438.5 491.79,442.7 492.31,447.4 492.86,452.2 493.42,457.1 493.99,461.9 494.55,466.5 495.10,470.6 495.66,474.4 496.23,478.0 496.81,481.5 497.38,484.7 497.92,487.7 498.44,490.3 498.90,492.5 499.57,495.5 500.11,497.5 500.62,498.6 501.20,499.0 501.70,498.9 502.21,498.4 502.75,497.4 503.36,495.7 504.10,493.3 504.52,491.7 504.98,489.9 505.48,487.9 505.99,485.6 506.53,483.3 507.07,480.8 507.63,478.2 508.19,475.7 508.75,473.1 509.30,470.6 509.80,468.3 510.31,465.9 510.82,463.5 511.34,461.0 511.86,458.5 512.39,455.9 512.91,453.4 513.44,451.0 513.96,448.6 514.48,446.3 515.00,444.1 515.51,442.0 516.01,439.9 516.50,437.9 517.00,436.0 517.49,434.0 517.99,432.2 518.49,430.4 519.00,428.7 519.52,427.0 520.05,425.5 520.60,424.0 521.08,422.8 521.56,421.7 522.05,420.6 522.55,419.6 523.06,418.7 523.57,417.8 524.09,416.9 524.61,416.1 525.14,415.3 525.68,414.6 526.21,413.9 526.76,413.2 527.30,412.5 527.77,411.9 528.24,411.4 528.72,410.9 529.19,410.5 529.67,410.0 530.15,409.6 530.63,409.2 531.12,408.9 531.62,408.5 532.12,408.2 532.64,407.9 533.16,407.6 533.69,407.3 534.24,407.1 534.80,406.8 535.26,406.6 535.72,406.4 536.21,406.3 536.70,406.1 537.20,406.0 537.71,405.8 538.23,405.7 538.75,405.6 539.28,405.5 539.80,405.4 540.32,406.1 540.85,406.1 541.36,406.0 541.88,405.2 542.38,405.6 542.88,404.7 543.37,405.7 543.84,405.5 544.30,404.5 544.86,404.0 545.41,404.6 545.95,404.7 546.47,405.1 546.99,404.5 547.50,403.7 548.00,405.1 548.49,404.4 548.98,406.4 549.48,405.9 549.97,405.6 550.47,405.7 550.97,403.9 551.48,403.9 552.00,404.5 552.49,404.9 552.99,405.1 553.48,404.8 553.98,405.3 554.48,404.5 554.98,405.3 555.48,403.7 555.98,404.0 556.48,404.5 556.99,404.1 557.49,404.9 557.99,404.7 558.50,404.5 559.00,405.1 559.50,404.6 560.00,404.2 560.50,404.3 561.00,405.1 561.50,405.2 562.00,404.0 562.50,405.1 563.00,405.3 563.50,404.5 564.00,404.6 564.50,404.0 565.00,404.6 565.50,404.5 566.00,404.7 566.50,403.6 567.00,405.3 567.50,404.5 568.00,404.3 568.50,405.0 569.00,404.6 569.50,404.5 570.00,404.8 570.50,403.7 571.00,404.6 571.50,404.3 572.00,405.3 572.50,405.3 573.00,404.1 573.50,404.5 574.00,403.8 574.50,404.4 575.00,405.1 575.50,405.2 576.00,404.5 576.50,404.2 577.00,403.9 577.50,404.7 578.00,405.3 578.50,403.8 579.00,405.0 579.50,403.6 580.00,403.9 580.50,404.0 581.00,404.8 581.50,404.2 582.00,404.2 582.50,404.7 583.00,403.8 583.50,404.9 584.00,403.8 584.50,404.5 585.00,404.1 585.50,404.0 586.00,404.6 586.50,404.4 587.00,404.3 587.50,404.3 588.00,404.6 588.50,403.9 589.00,404.0 589.50,404.7 590.00,404.7 590.50,404.6 591.00,405.1 591.50,404.7 592.00,405.1 592.50,404.0 593.00,404.9 593.50,405.1 594.00,405.2 594.50,404.2 595.00,404.2 595.50,405.3 596.00,404.0 596.50,405.4 597.00,405.2 597.50,403.8 598.00,404.0 598.50,404.9 599.00,404.1 599.50,403.8 600.00,405.1 600.50,404.4 601.00,405.0 601.50,403.8 602.00,404.3 602.50,404.8 603.00,403.6 603.50,404.0 604.00,404.8 604.50,405.2 605.00,405.3 605.50,403.8 606.00,404.5 606.50,405.0 607.00,404.5 607.50,404.8 608.00,403.9 608.50,403.7 609.00,403.8 609.50,403.7 610.00,404.6 610.50,404.5 611.00,404.6 611.50,403.9 612.00,403.9 612.50,404.0 613.00,405.1 613.50,405.4 614.00,405.3 614.50,403.8 615.00,403.7 615.50,405.3 616.00,404.4 616.50,405.0 617.00,404.2 617.50,404.4 618.00,404.5 618.50,404.4 619.00,404.7 619.50,403.6 620.00,404.9 620.50,405.1 621.00,403.9 621.50,404.4 622.00,404.9 622.50,404.3 623.00,404.0 623.50,403.9 624.00,404.5 624.50,403.6 625.00,405.2 625.50,405.0 626.00,404.9 626.50,405.1 627.00,404.7 627.50,404.3 628.00,404.7 628.50,404.5 629.00,405.4 629.50,405.0 630.00,404.1 630.50,405.2 631.00,404.9 631.50,405.0 632.00,405.1 632.50,404.3 633.00,405.2 633.50,405.2 634.00,404.9 634.50,405.0 635.00,405.0 635.50,404.3 636.00,404.9 636.50,403.7 637.00,404.2 637.50,404.4 638.00,403.6 638.50,404.2 639.00,404.7 639.50,404.7 640.00,404.0 640.50,405.3 641.00,404.8 641.50,404.2 642.00,404.8 642.50,404.6 643.00,404.6 643.50,404.3 644.00,405.4 644.50,404.8 645.00,404.9 645.50,405.0 646.00,405.4 646.50,403.0 647.00,403.5 647.50,403.1 648.00,401.7 648.50,401.3 649.00,401.3 649.50,402.2 650.00,403.1 650.50,403.2 651.00,404.1 651.50,405.2 652.00,404.6 652.50,404.5 653.00,405.3 653.50,404.6 654.00,405.4 654.50,404.7 655.00,405.1 655.50,403.7 656.00,404.7 656.50,405.0 657.00,403.7 657.50,405.3 658.00,403.9 658.50,404.4 659.00,403.9 659.50,404.5 660.00,404.7 660.50,403.7 661.00,405.3 661.50,404.4 662.00,404.5 662.50,404.7 663.00,404.3 663.50,404.1 664.00,404.8 664.50,404.6 665.00,404.1 665.50,404.9 666.00,404.1 666.50,403.6 667.00,404.0 667.50,403.7 668.00,403.9 668.50,405.0 669.00,404.3 669.50,405.2 670.00,404.9 670.50,403.7 671.00,405.4 671.50,405.3 672.00,403.7 672.50,405.2 673.00,404.4 673.50,404.5 674.00,405.4 674.50,404.0 675.00,404.5 675.50,405.3 676.00,404.9 676.50,404.4 677.00,405.4 677.50,405.1 678.00,404.7 678.50,403.8 679.00,404.7 679.50,404.4 680.00,404.0 680.50,403.7 681.00,404.6 681.50,403.8 682.00,404.4 682.50,404.8 683.00,404.4 683.50,404.1 684.00,404.6 684.50,404.4 685.00,405.0 685.50,404.6 686.00,405.4 686.50,405.3 687.00,404.9 687.50,404.0 688.00,403.8 688.50,405.2 689.00,405.0 689.50,404.7 690.00,404.2 690.50,404.1 691.00,404.8 691.50,404.6 692.00,404.7 692.50,404.7 693.00,405.0 693.50,403.9 694.00,404.0 694.50,405.4 695.00,405.2 695.50,405.2 696.00,403.7 696.50,403.7 697.00,404.1 697.50,404.4 698.00,404.7 698.50,403.8 699.00,404.6 699.50,403.7 700.00,403.8 700.50,404.8 701.00,404.6 701.50,404.7 702.00,404.3 702.50,404.5 703.00,404.0 703.50,404.2 704.00,404.9 704.50,405.1 705.00,403.7 705.50,403.8 706.00,405.1 706.50,404.7 707.00,405.0 707.50,404.0 708.00,404.4 708.50,404.1 709.00,405.1 709.50,404.3 710.00,404.8 710.50,405.4 711.00,404.2 711.50,404.6 712.00,404.9 712.50,405.3 713.00,404.4 713.50,404.3 714.00,403.8 714.50,405.2 715.00,403.7 715.50,403.7 716.00,404.6 716.50,404.5 717.00,404.8 717.50,404.1 718.00,405.0 718.50,403.7 719.00,404.0 719.50,404.8 720.00,403.7 720.50,404.1 721.00,404.9 721.50,404.8 722.00,404.1 722.50,403.9 723.00,404.2 723.50,404.9 724.00,404.3 724.50,403.8 725.00,404.9 725.50,404.6 726.00,405.3 726.50,405.3 727.00,405.2 727.50,404.4 728.00,405.0 728.50,404.1 729.00,404.2 729.50,404.3 730.00,405.3 730.50,405.2 731.00,404.0 731.50,404.3 732.00,404.3 732.50,404.3 733.00,404.3 733.50,404.3 734.00,404.0 734.50,404.6 735.00,405.0 735.50,404.6 736.00,405.1 736.50,404.6 737.00,403.9 737.50,405.0 738.00,405.2 738.50,404.1 739.00,403.6 739.50,404.5 740.00,404.6 740.50,404.6 741.00,405.3 741.50,404.8 742.00,405.0 742.50,403.7 743.00,404.6 743.50,405.0 744.00,403.8 744.50,403.7 745.00,404.9 745.50,405.2 746.00,403.8 746.50,404.7 747.00,403.9 747.50,404.9 748.00,404.8 748.50,404.0 749.00,404.0 749.50,405.0 750.00,404.5 750.50,405.0 751.00,404.3 751.50,404.2 752.00,405.3 752.50,404.8 753.00,404.5 753.50,404.6 754.00,404.9 754.50,404.9 755.00,405.2 755.50,404.1 756.00,404.3 756.50,403.4 757.00,403.2 757.50,402.6 758.00,403.2 758.50,403.8 759.00,404.5 759.50,404.5 760.00,404.5 760.50,404.9 761.00,405.0 761.50,404.4 762.00,404.4 762.50,403.9 763.00,404.9 763.50,405.4 764.00,404.3 764.50,403.9 765.00,404.0 765.50,404.4 766.00,404.1 766.50,405.3 767.00,403.7 767.50,404.2 768.00,403.8 768.50,404.8 769.00,405.0 769.50,403.9 770.00,403.7 770.50,404.4 771.00,404.7 771.50,405.2 772.00,403.7 772.50,403.8 773.00,403.9 773.50,404.0 774.00,404.0 774.50,404.9 775.00,404.7 775.50,404.0 776.00,403.9 776.50,404.1 777.00,403.9 777.50,405.0 778.00,404.2 778.50,404.6 779.00,405.1 779.50,404.5 780.00,404.1 780.50,405.2 781.00,405.2 781.50,404.2 782.00,404.6 782.50,405.3 783.00,404.5 783.50,404.0 784.00,403.7 784.50,405.3 785.00,405.0 785.50,404.3 786.00,404.5 786.50,404.5 787.00,404.1 787.50,405.4 788.00,404.8 788.50,404.0 789.00,403.6 789.50,404.5 790.00,404.3 790.50,405.0 791.00,404.9 791.50,404.7 792.00,403.9 792.50,403.9 793.00,404.2 793.50,404.1 794.00,405.2 794.50,404.5 795.00,404.7 795.50,405.4 796.00,404.1 796.50,404.6 797.00,403.9 797.50,405.0 798.00,403.6 798.50,405.1 799.00,405.1 799.50,405.1 800.00,403.7 800.50,404.1 801.00,404.9 801.50,403.8 802.00,404.5 802.50,404.4 803.00,405.3 803.50,404.7 804.00,405.1 804.50,404.1 805.00,405.0 805.50,404.4 806.00,405.3 806.50,403.8 807.00,405.1 807.50,404.0 808.00,404.6 808.50,404.5 809.00,403.9 809.50,405.1 810.00,404.2 810.50,404.2 811.00,403.7 811.50,404.2 812.00,404.4 812.50,404.9 813.00,404.2 813.50,404.8 814.00,403.8 814.50,404.3 815.00,404.4 815.50,405.3 816.00,405.1 816.50,404.8 817.00,403.6 817.50,404.3 818.00,404.9 818.50,404.0 819.00,404.6 819.50,404.4 820.00,403.6 820.50,405.4 821.00,405.0 821.50,404.0 822.00,404.7 822.50,404.1 823.00,404.3 823.50,404.6 824.00,404.1 824.50,404.2 825.00,404.3 825.50,404.8 826.00,404.1 826.50,404.0 827.00,404.9 827.50,404.2 828.00,405.3 828.50,404.6 829.00,404.9 829.50,404.2 830.00,405.1 830.50,403.8 831.00,403.9 831.50,403.8 832.00,404.8 832.50,404.9 833.00,403.9 833.50,404.3 834.00,405.1 834.50,404.7 835.00,403.8 835.50,404.0 836.00,403.9 836.50,403.8 837.00,404.3 837.50,403.7 838.00,405.3 838.50,404.4 839.00,404.5 839.50,404.8 840.00,405.0 840.50,405.1 841.00,404.3 841.50,404.2 842.00,404.3 842.50,403.6 843.00,404.3 843.50,404.9 844.00,405.4 844.50,405.0 845.00,404.8 845.50,404.7 846.00,403.6 846.50,404.2 847.00,404.2 847.50,404.8 848.00,403.8 848.50,404.3 849.00,404.5 849.50,405.0 850.00,405.1 850.50,404.7 851.00,403.9 851.50,405.0 852.00,405.2 852.50,404.6 853.00,404.2 853.50,404.5 854.00,403.9 854.50,404.9 855.00,405.4 855.50,403.7 856.00,403.3 856.50,402.7 857.00,400.8 857.50,401.3 858.00,401.5 858.50,401.6 859.00,402.1 859.50,403.2 860.00,404.6 860.50,404.9 861.00,404.2 861.50,405.3 862.00,404.3 862.50,404.4 863.00,403.8 863.50,405.4 864.00,403.8 864.50,405.2 865.00,404.6 865.50,404.6 866.00,404.6 866.50,404.1 867.00,405.2 867.50,405.4 868.00,405.1 868.50,404.7 869.00,403.8 869.50,405.1 870.00,404.1 870.50,405.2 871.00,404.0 871.50,404.6 872.00,405.1 872.50,403.9 873.00,404.6 873.50,403.7 874.00,403.7 874.50,403.9 875.00,405.4 875.50,405.3 876.00,404.8 876.50,404.2 877.00,404.8 877.50,404.9 878.00,404.3" fill="none" stroke="#f0f040" stroke-width="1.5" stroke-linejoin="round"/></g><line x1="281.0" y1="126.5" x2="286.0" y2="126.5" stroke="#333" stroke-width="1"/><line x1="281.0" y1="128.5" x2="286.0" y2="128.5" stroke="#333" stroke-width="1"/><text x="280.0" y="129.4" font-family="Liberation Mono" font-size="8" font-weight="bold" fill="#444" text-anchor="end">5.04</text><line x1="281.0" y1="156.5" x2="286.0" y2="156.5" stroke="#333" stroke-width="1"/><text x="280.0" y="159.3" font-family="Liberation Mono" font-size="8" font-weight="bold" fill="#444" text-anchor="end">4.5</text><line x1="281.0" y1="184.5" x2="286.0" y2="184.5" stroke="#333" stroke-width="1"/><text x="280.0" y="187.0" font-family="Liberation Mono" font-size="8" font-weight="bold" fill="#444" text-anchor="end">4</text><line x1="281.0" y1="211.5" x2="286.0" y2="211.5" stroke="#333" stroke-width="1"/><text x="280.0" y="214.7" font-family="Liberation Mono" font-size="8" font-weight="bold" fill="#444" text-anchor="end">3.5</text><line x1="281.0" y1="239.5" x2="286.0" y2="239.5" stroke="#333" stroke-width="1"/><text x="280.0" y="242.5" font-family="Liberation Mono" font-size="8" font-weight="bold" fill="#444" text-anchor="end">3</text><line x1="281.0" y1="267.5" x2="286.0" y2="267.5" stroke="#333" stroke-width="1"/><text x="280.0" y="270.2" font-family="Liberation Mono" font-size="8" font-weight="bold" fill="#444" text-anchor="end">2.5</text><line x1="281.0" y1="294.5" x2="286.0" y2="294.5" stroke="#333" stroke-width="1"/><text x="280.0" y="297.9" font-family="Liberation Mono" font-size="8" font-weight="bold" fill="#444" text-anchor="end">2</text><line x1="281.0" y1="322.5" x2="286.0" y2="322.5" stroke="#333" stroke-width="1"/><text x="280.0" y="325.6" font-family="Liberation Mono" font-size="8" font-weight="bold" fill="#444" text-anchor="end">1.5</text><line x1="281.0" y1="350.5" x2="286.0" y2="350.5" stroke="#333" stroke-width="1"/><text x="280.0" y="353.3" font-family="Liberation Mono" font-size="8" font-weight="bold" fill="#444" text-anchor="end">1</text><line x1="281.0" y1="378.5" x2="286.0" y2="378.5" stroke="#333" stroke-width="1"/><text x="280.0" y="381.0" font-family="Liberation Mono" font-size="8" font-weight="bold" fill="#444" text-anchor="end">0.5</text><line x1="281.0" y1="405.5" x2="286.0" y2="405.5" stroke="#333" stroke-width="1"/><text x="280.0" y="408.7" font-family="Liberation Mono" font-size="8" font-weight="bold" fill="#444" text-anchor="end">0</text><line x1="281.0" y1="433.5" x2="286.0" y2="433.5" stroke="#333" stroke-width="1"/><text x="280.0" y="436.4" font-family="Liberation Mono" font-size="8" font-weight="bold" fill="#444" text-anchor="end">-0.5</text><line x1="281.0" y1="461.5" x2="286.0" y2="461.5" stroke="#333" stroke-width="1"/><text x="280.0" y="464.1" font-family="Liberation Mono" font-size="8" font-weight="bold" fill="#444" text-anchor="end">-1</text><line x1="281.0" y1="488.5" x2="286.0" y2="488.5" stroke="#333" stroke-width="1"/><text x="280.0" y="491.8" font-family="Liberation Mono" font-size="8" font-weight="bold" fill="#444" text-anchor="end">-1.5</text><line x1="281.0" y1="516.5" x2="286.0" y2="516.5" stroke="#333" stroke-width="1"/><text x="280.0" y="519.6" font-family="Liberation Mono" font-size="8" font-weight="bold" fill="#444" text-anchor="end">-2</text><line x1="281.0" y1="542.5" x2="286.0" y2="542.5" stroke="#333" stroke-width="1"/><text x="280.0" y="545.6" font-family="Liberation Mono" font-size="8" font-weight="bold" fill="#444" text-anchor="end">-2.47</text><line x1="287.5" y1="544.5" x2="287.5" y2="549.0" stroke="#222" stroke-width="1"/><text x="287.8" y="556.0" font-family="Liberation Mono" font-size="7.6" font-weight="bold" fill="#3a3a3a" text-anchor="middle">1.03</text><line x1="312.5" y1="544.5" x2="312.5" y2="549.0" stroke="#222" stroke-width="1"/><text x="313.5" y="556.0" font-family="Liberation Mono" font-size="7.6" font-weight="bold" fill="#3a3a3a" text-anchor="middle">1.04</text><line x1="360.5" y1="544.5" x2="360.5" y2="549.0" stroke="#222" stroke-width="1"/><text x="361.8" y="556.0" font-family="Liberation Mono" font-size="7.6" font-weight="bold" fill="#3a3a3a" text-anchor="middle">1.05</text><line x1="409.5" y1="544.5" x2="409.5" y2="549.0" stroke="#222" stroke-width="1"/><text x="410.0" y="556.0" font-family="Liberation Mono" font-size="7.6" font-weight="bold" fill="#3a3a3a" text-anchor="middle">1.06</text><line x1="457.5" y1="544.5" x2="457.5" y2="549.0" stroke="#222" stroke-width="1"/><text x="458.3" y="556.0" font-family="Liberation Mono" font-size="7.6" font-weight="bold" fill="#3a3a3a" text-anchor="middle">1.07</text><line x1="505.5" y1="544.5" x2="505.5" y2="549.0" stroke="#222" stroke-width="1"/><text x="506.6" y="556.0" font-family="Liberation Mono" font-size="7.6" font-weight="bold" fill="#3a3a3a" text-anchor="middle">1.08</text><line x1="554.5" y1="544.5" x2="554.5" y2="549.0" stroke="#222" stroke-width="1"/><text x="554.9" y="556.0" font-family="Liberation Mono" font-size="7.6" font-weight="bold" fill="#3a3a3a" text-anchor="middle">1.09</text><line x1="602.5" y1="544.5" x2="602.5" y2="549.0" stroke="#222" stroke-width="1"/><text x="603.1" y="556.0" font-family="Liberation Mono" font-size="7.6" font-weight="bold" fill="#3a3a3a" text-anchor="middle">1.1</text><line x1="650.5" y1="544.5" x2="650.5" y2="549.0" stroke="#222" stroke-width="1"/><text x="651.4" y="556.0" font-family="Liberation Mono" font-size="7.6" font-weight="bold" fill="#3a3a3a" text-anchor="middle">1.11</text><line x1="698.5" y1="544.5" x2="698.5" y2="549.0" stroke="#222" stroke-width="1"/><text x="699.7" y="556.0" font-family="Liberation Mono" font-size="7.6" font-weight="bold" fill="#3a3a3a" text-anchor="middle">1.12</text><line x1="747.5" y1="544.5" x2="747.5" y2="549.0" stroke="#222" stroke-width="1"/><text x="747.9" y="556.0" font-family="Liberation Mono" font-size="7.6" font-weight="bold" fill="#3a3a3a" text-anchor="middle">1.13</text><line x1="795.5" y1="544.5" x2="795.5" y2="549.0" stroke="#222" stroke-width="1"/><text x="796.2" y="556.0" font-family="Liberation Mono" font-size="7.6" font-weight="bold" fill="#3a3a3a" text-anchor="middle">1.14</text><line x1="843.5" y1="544.5" x2="843.5" y2="549.0" stroke="#222" stroke-width="1"/><text x="844.5" y="556.0" font-family="Liberation Mono" font-size="7.6" font-weight="bold" fill="#3a3a3a" text-anchor="middle">1.15</text><line x1="877.5" y1="544.5" x2="877.5" y2="549.0" stroke="#222" stroke-width="1"/><text x="878.6" y="556.0" font-family="Liberation Mono" font-size="7.6" font-weight="bold" fill="#3a3a3a" text-anchor="middle">1.16</text></svg>
<div class="t" style="left:255.5px;top:559px;width:240px;height:12px;line-height:12px;text-align:left;font-size:9.5px;color:#2a2a2a">X Scale: T(s), Degrees if CAM Analyzed Data, Hz if FFT</div>
<div class="t" style="left:633px;top:559px;width:242px;height:12px;line-height:12px;text-align:left;font-size:9.9px;color:#333">EMissFireDetector, www.AutomotiveTestSolutions.com</div>
</body></html>
